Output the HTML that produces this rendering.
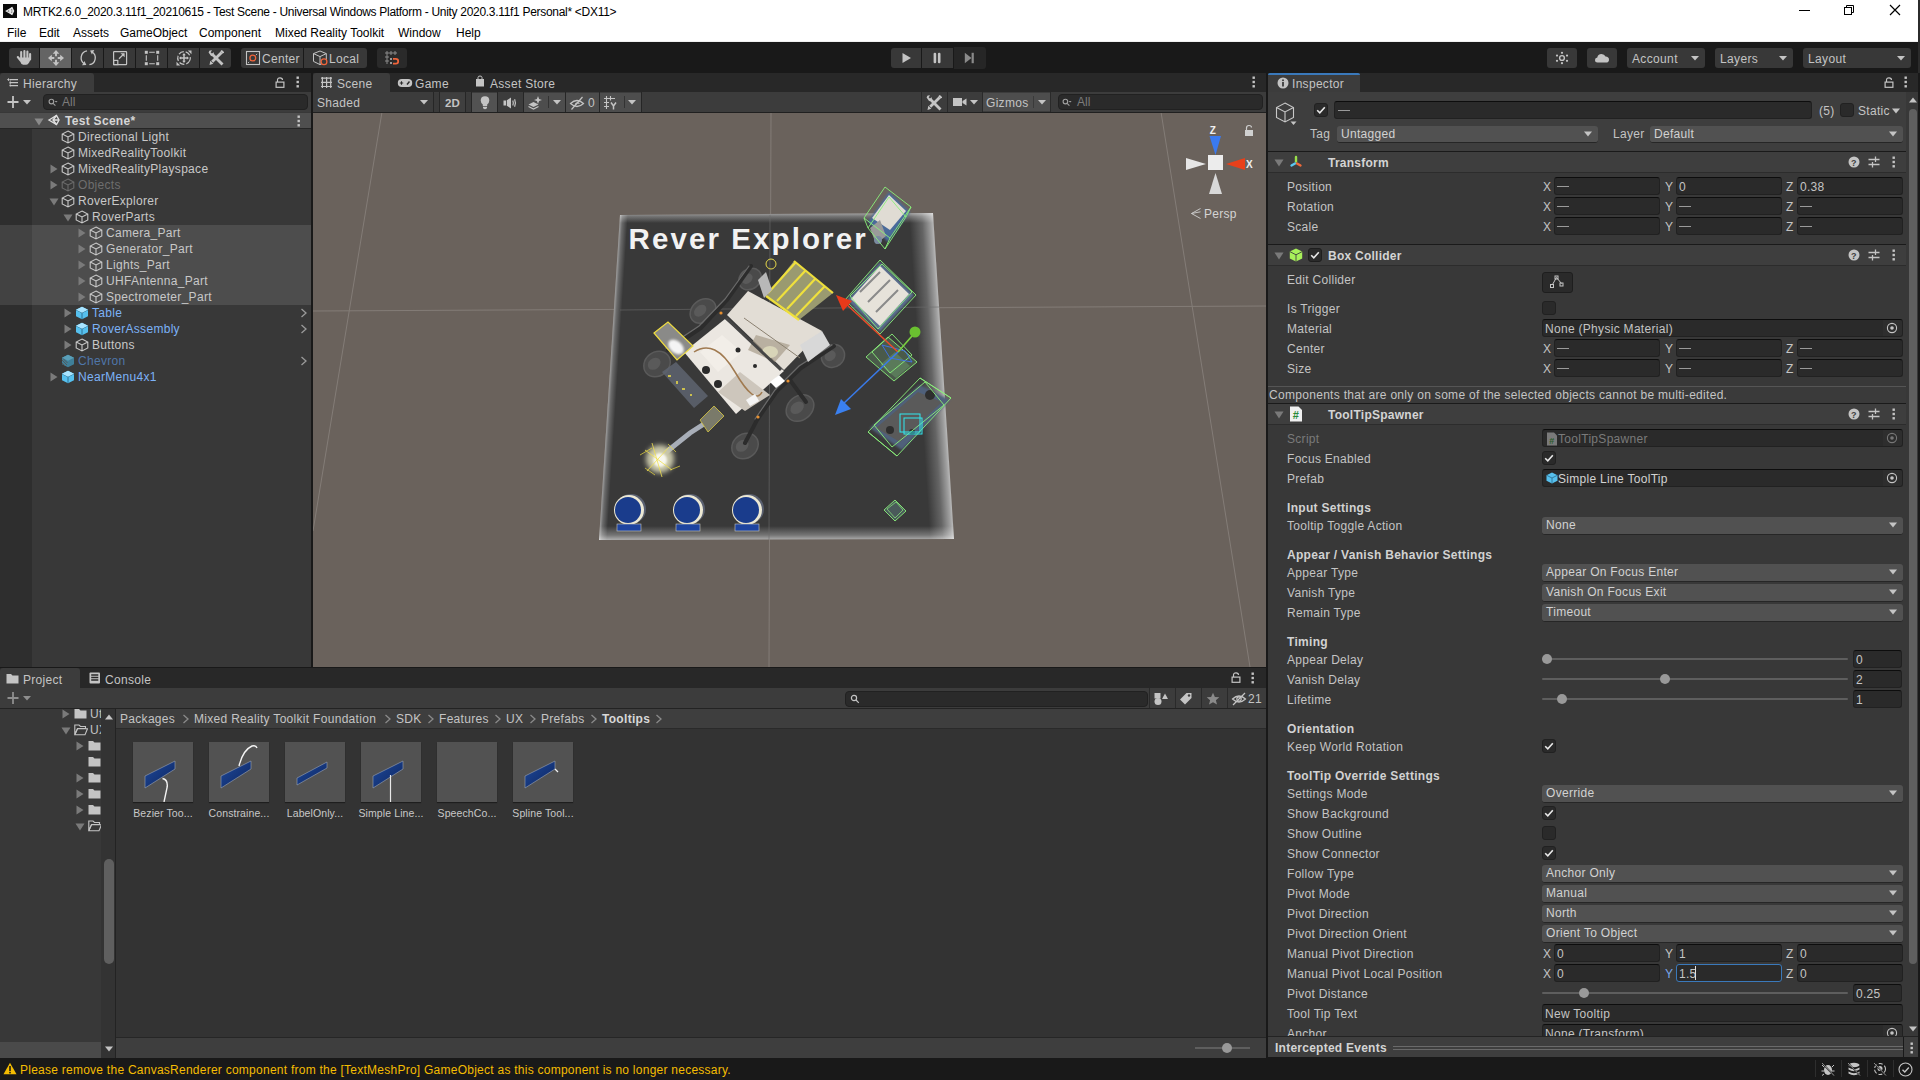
<!DOCTYPE html><html><head><meta charset="utf-8"><style>
*{box-sizing:border-box}
html,body{margin:0;padding:0}
body{width:1920px;height:1080px;overflow:hidden;background:#191919;position:relative;font-family:"Liberation Sans",sans-serif;font-size:12px;letter-spacing:0.3px;color:#c4c4c4}
div{position:absolute}
.t{white-space:nowrap}
</style></head><body><div style="left:0px;top:0px;width:1918px;height:42px;background:#fff"></div><div style="left:0px;top:41px;width:1918px;height:1px;background:#f0f0f0"></div><div style="left:1918px;top:0px;width:2px;height:73px;background:#2b2b2b"></div><svg style="position:absolute;left:3px;top:4px;" width="14" height="14" viewBox="0 0 14 14"><rect width="14" height="14" fill="#0a0a0a"/><g fill="none" stroke="#e6e6e6" stroke-width="1.4"><path d="M3.5 7 L9 3.8 L10.5 7 L9 10.2 Z"/><path d="M6 7 L10.5 7 M9 3.8 L6.5 7 L9 10.2"/></g></svg><div class="t" style="left:23px;top:4px;color:#000;font-size:12px;font-weight:400;line-height:16px;letter-spacing:-0.3px">MRTK2.6.0_2020.3.11f1_20210615 - Test Scene - Universal Windows Platform - Unity 2020.3.11f1 Personal* &lt;DX11&gt;</div><div style="left:1799px;top:10px;width:11px;height:1px;background:#000"></div><svg style="position:absolute;left:1843px;top:4px;" width="12" height="12" viewBox="0 0 12 12"><g fill="none" stroke="#000" stroke-width="1"><rect x="1.5" y="3.5" width="7" height="7"/><path d="M3.5 3.5 V1.5 H10.5 V8.5 H8.5"/></g></svg><svg style="position:absolute;left:1889px;top:4px;" width="12" height="12" viewBox="0 0 12 12"><path d="M1 1 L11 11 M11 1 L1 11" stroke="#000" stroke-width="1.2"/></svg><div class="t" style="left:7px;top:25px;color:#000;font-size:12px;font-weight:400;line-height:16px;letter-spacing:0px">File</div><div class="t" style="left:39px;top:25px;color:#000;font-size:12px;font-weight:400;line-height:16px;letter-spacing:0px">Edit</div><div class="t" style="left:73px;top:25px;color:#000;font-size:12px;font-weight:400;line-height:16px;letter-spacing:0px">Assets</div><div class="t" style="left:120px;top:25px;color:#000;font-size:12px;font-weight:400;line-height:16px;letter-spacing:0px">GameObject</div><div class="t" style="left:199px;top:25px;color:#000;font-size:12px;font-weight:400;line-height:16px;letter-spacing:0px">Component</div><div class="t" style="left:275px;top:25px;color:#000;font-size:12px;font-weight:400;line-height:16px;letter-spacing:0px">Mixed Reality Toolkit</div><div class="t" style="left:398px;top:25px;color:#000;font-size:12px;font-weight:400;line-height:16px;letter-spacing:0px">Window</div><div class="t" style="left:456px;top:25px;color:#000;font-size:12px;font-weight:400;line-height:16px;letter-spacing:0px">Help</div><div style="left:9px;top:48px;width:30px;height:20px;background:#383838;border-radius:3px 0 0 3px"></div><div style="left:40px;top:48px;width:31px;height:20px;background:#646464;"></div><div style="left:72px;top:48px;width:31px;height:20px;background:#383838;"></div><div style="left:104px;top:48px;width:31px;height:20px;background:#383838;"></div><div style="left:136px;top:48px;width:31px;height:20px;background:#383838;"></div><div style="left:168px;top:48px;width:31px;height:20px;background:#383838;"></div><div style="left:200px;top:48px;width:31px;height:20px;background:#383838;border-radius:0 3px 3px 0"></div><svg style="position:absolute;left:16px;top:49px;" width="16" height="17" viewBox="0 0 16 17"><g stroke="#c4c4c4" stroke-width="2.1" stroke-linecap="round"><path d="M5.2 3 V9 M8.4 2 V9 M11.4 2.6 V9 M14.1 5 V10.5"/><path d="M1.8 8 L4.6 11.5"/></g><path d="M4.2 8.5 H14.6 L14 11.5 Q12.8 15.6 10 15.8 H7.2 Q5 15.6 4.2 12.5Z" fill="#c4c4c4"/></svg><svg style="position:absolute;left:47px;top:49px;" width="18" height="18" viewBox="0 0 18 18"><g stroke="#c4c4c4" stroke-width="1.9"><path d="M9 4 V7.3 M9 10.7 V14 M4 9 H7.3 M10.7 9 H14"/></g><g fill="#c4c4c4"><path d="M9 1 L12.3 4.8 H5.7Z"/><path d="M9 17 L12.3 13.2 H5.7Z"/><path d="M1 9 L4.8 5.7 V12.3Z"/><path d="M17 9 L13.2 5.7 V12.3Z"/></g></svg><svg style="position:absolute;left:79px;top:49px;" width="18" height="18" viewBox="0 0 18 18"><g fill="none" stroke="#c4c4c4" stroke-width="1.3"><path d="M8.0 1.9 A7 7 0 0 0 5.7 14.9"/><path d="M10.4 15.7 A7 7 0 0 0 12.7 2.7"/></g><g fill="#c4c4c4"><path d="M7.3 15.9 L5.5 12.0 L3.1 16.3Z"/><path d="M11.1 1.5 L12.9 5.4 L15.3 1.1Z"/></g></svg><svg style="position:absolute;left:112px;top:50px;" width="16" height="16" viewBox="0 0 16 16"><g fill="none" stroke="#c4c4c4" stroke-width="1.2"><rect x="1.6" y="1.6" width="13" height="13" rx="0.6"/><rect x="1.6" y="10.4" width="4.2" height="4.2"/><path d="M7 8.7 L11.8 4"/></g><path d="M12.6 3.2 L12.6 7.3 L8.5 3.2Z" fill="#c4c4c4"/></svg><svg style="position:absolute;left:144px;top:50px;" width="16" height="16" viewBox="0 0 16 16"><g fill="#c4c4c4"><rect x="0.8" y="0.8" width="3" height="3"/><rect x="12.2" y="0.8" width="3" height="3"/><rect x="0.8" y="12.2" width="3" height="3"/><rect x="12.2" y="12.2" width="3" height="3"/></g><g stroke="#c4c4c4" stroke-width="1.1"><path d="M5.2 2.3 H10.8 M5.2 13.7 H10.8 M2.3 5.2 V10.8 M13.7 5.2 V10.8"/></g></svg><svg style="position:absolute;left:176px;top:50px;" width="16" height="16" viewBox="0 0 16 16"><g fill="none" stroke="#c4c4c4" stroke-width="1.2" stroke-dasharray="5.2 1.9"><circle cx="8" cy="8" r="6.3" transform="rotate(20 8 8)"/></g><g stroke="#c4c4c4" stroke-width="1.5"><path d="M8 4.2 V11.8 M4.2 8 H11.8"/></g><g fill="#c4c4c4"><path d="M8 3 L9.8 5.2 H6.2Z M8 13 L9.8 10.8 H6.2Z M3 8 L5.2 6.2 V9.8Z M13 8 L10.8 6.2 V9.8Z"/><path d="M15.5 0.5 V4.2 L11.8 0.5Z M0.5 15.5 V11.8 L4.2 15.5Z"/></g></svg><svg style="position:absolute;left:208px;top:50px;" width="16" height="16" viewBox="0 0 16 16"><g stroke="#c4c4c4" stroke-width="2.8" stroke-linecap="butt"><path d="M4.5 4.5 L14.5 14.5"/><path d="M13.6 2.4 L4.2 11.8"/></g><path d="M0.6 2.6 Q1 -0.2 4 0.4 L2.6 2.3 L3.9 3.6 L5.8 2.2 Q6.4 5.6 3.2 6.2Z" fill="#c4c4c4"/><path d="M1.5 14.9 L2.3 10.7 L5.3 13.7Z" fill="#c4c4c4"/><path d="M12.3 1.3 L13.8 -0.1 L16.1 2.2 L14.7 3.7Z" fill="#c4c4c4"/></svg><div style="left:241px;top:48px;width:62px;height:20px;background:#383838;border-radius:3px 0 0 3px"></div><div style="left:304px;top:48px;width:63px;height:20px;background:#383838;border-radius:0 3px 3px 0"></div><svg style="position:absolute;left:245px;top:50px;" width="16" height="16" viewBox="0 0 16 16"><rect x="1.5" y="1.5" width="13" height="13" fill="none" stroke="#c4c4c4" stroke-width="1.1"/><path d="M3 13 L13 3" stroke="#c4c4c4" stroke-width="0.9" stroke-dasharray="1.6 1.2"/><circle cx="7.8" cy="8" r="2.9" fill="#383838" stroke="#f0643a" stroke-width="1.3"/></svg><div class="t" style="left:262px;top:51px;color:#c4c4c4;font-size:12px;font-weight:400;line-height:16px;letter-spacing:0.3px">Center</div><svg style="position:absolute;left:312px;top:50px;" width="17" height="17" viewBox="0 0 17 17"><g fill="none" stroke="#c4c4c4" stroke-width="1"><path d="M8 1 L14.3 3.6 V11.4 L8 14.6 L1.5 11.4 V3.6 Z M1.5 3.6 L8 6.6 L14.3 3.6 M8 6.6 V14.6"/></g><circle cx="12" cy="11.8" r="2.9" fill="#383838" stroke="#f0643a" stroke-width="1.3"/></svg><div class="t" style="left:329px;top:51px;color:#c4c4c4;font-size:12px;font-weight:400;line-height:16px;letter-spacing:0.3px">Local</div><div style="left:377px;top:48px;width:30px;height:20px;background:#2a2a2a;border-radius:3px"></div><svg style="position:absolute;left:384px;top:50px;" width="16" height="16" viewBox="0 0 16 16"><g stroke="#8a8a8a" stroke-width="1" fill="none"><path d="M3 1 V14 M7 1 V5 M11 1 V5 M1 3 H13 M1 7 H5 M1 11 H5"/></g><g fill="#9a9a9a"><rect x="6" y="8" width="2" height="2"/><rect x="6" y="12" width="2" height="2"/></g><path d="M9 8.8 H11.8 Q14.2 8.8 14.2 11.2 Q14.2 13.6 11.8 13.6 H9" fill="none" stroke="#f0643a" stroke-width="1.8"/></svg><div style="left:891px;top:48px;width:30px;height:20px;background:#383838;border-radius:3px 0 0 3px"></div><div style="left:922px;top:48px;width:31px;height:20px;background:#383838"></div><div style="left:954px;top:47px;width:32px;height:22px;background:#262626;border-radius:0 3px 3px 0"></div><svg style="position:absolute;left:898px;top:50px;" width="16" height="16" viewBox="0 0 16 16"><path d="M4.5 3 L13 8 L4.5 13 Z" fill="#c4c4c4"/></svg><svg style="position:absolute;left:929px;top:50px;" width="16" height="16" viewBox="0 0 16 16"><rect x="4.6" y="2.8" width="2.6" height="10.4" rx="1.2" fill="#c4c4c4"/><rect x="8.9" y="2.8" width="2.6" height="10.4" rx="1.2" fill="#c4c4c4"/></svg><svg style="position:absolute;left:962px;top:50px;" width="16" height="16" viewBox="0 0 16 16"><path d="M2.8 2.8 L9.5 8 L2.8 13.2 Z" fill="#8a8a8a"/><rect x="9.6" y="2.8" width="2.2" height="10.4" fill="#8a8a8a"/></svg><div style="left:1547px;top:48px;width:30px;height:20px;background:#383838;border-radius:3px"></div><svg style="position:absolute;left:1554px;top:50px;" width="16" height="16" viewBox="0 0 16 16"><circle cx="8" cy="8" r="2.4" fill="none" stroke="#c4c4c4" stroke-width="1.4"/><g fill="#c4c4c4"><circle cx="8" cy="2.8" r="1.1"/><circle cx="8" cy="13.2" r="1.1"/><circle cx="3" cy="5.6" r="1.1"/><circle cx="3" cy="10.8" r="1.1"/><circle cx="13" cy="5.6" r="1.1"/><circle cx="13" cy="10.8" r="1.1"/></g></svg><div style="left:1587px;top:48px;width:30px;height:20px;background:#383838;border-radius:3px"></div><svg style="position:absolute;left:1594px;top:50px;" width="16" height="16" viewBox="0 0 16 16"><path fill="#c4c4c4" d="M3.5 12.5 Q1 12.5 1 10 Q1 7.8 3.3 7.6 Q3.8 4 7.5 4 Q10.5 4 11.5 6.6 Q15 6.8 15 9.7 Q15 12.5 12 12.5 Z"/></svg><div style="left:1627px;top:48px;width:78px;height:20px;background:#383838;border-radius:3px"></div><div class="t" style="left:1632px;top:51px;color:#c4c4c4;font-size:12px;font-weight:400;line-height:16px;letter-spacing:0.35px">Account</div><svg style="position:absolute;left:1690px;top:53px;" width="10" height="10" viewBox="0 0 10 10"><path d="M1 3 L9 3 L5 7.5 Z" fill="#c4c4c4"/></svg><div style="left:1715px;top:48px;width:78px;height:20px;background:#383838;border-radius:3px"></div><div class="t" style="left:1720px;top:51px;color:#c4c4c4;font-size:12px;font-weight:400;line-height:16px;letter-spacing:0.35px">Layers</div><svg style="position:absolute;left:1778px;top:53px;" width="10" height="10" viewBox="0 0 10 10"><path d="M1 3 L9 3 L5 7.5 Z" fill="#c4c4c4"/></svg><div style="left:1803px;top:48px;width:108px;height:20px;background:#383838;border-radius:3px"></div><div class="t" style="left:1808px;top:51px;color:#c4c4c4;font-size:12px;font-weight:400;line-height:16px;letter-spacing:0.35px">Layout</div><svg style="position:absolute;left:1896px;top:53px;" width="10" height="10" viewBox="0 0 10 10"><path d="M1 3 L9 3 L5 7.5 Z" fill="#c4c4c4"/></svg><div style="left:0px;top:73px;width:311px;height:19px;background:#282828"></div><div style="left:0px;top:73px;width:94px;height:19px;background:#3c3c3c;border-radius:3px 3px 0 0"></div><svg style="position:absolute;left:6px;top:77px;" width="13" height="11" viewBox="0 0 13 11"><g stroke="#c4c4c4" stroke-width="1.2"><path d="M4 2.6 H12 M4.5 5.7 H12 M4.5 8.6 H12"/><path d="M1.2 2.6 H3.8 M2.5 1.3 V3.9" stroke-width="0.9"/><path d="M4.2 3.2 V8.6" stroke-width="0.6"/></g><g fill="#c4c4c4"><circle cx="4.3" cy="5.7" r="0.9"/><circle cx="4.3" cy="8.6" r="0.9"/></g></svg><div class="t" style="left:23px;top:76px;color:#c4c4c4;font-size:12px;font-weight:400;line-height:16px;">Hierarchy</div><svg style="position:absolute;left:275px;top:77px;" width="10" height="11" viewBox="0 0 10 11"><g fill="none" stroke="#c4c4c4" stroke-width="1.2"><path d="M2.5 5 V3 Q2.5 0.8 5 0.8 Q7.5 0.8 7.5 3"/><rect x="1.1" y="5.1" width="7.8" height="5.2"/></g></svg><svg style="position:absolute;left:296px;top:76px;" width="4" height="12" viewBox="0 0 4 12"><g fill="#c4c4c4"><rect x="0.5" y="0.5" width="2.4" height="2.4"/><rect x="0.5" y="4.8" width="2.4" height="2.4"/><rect x="0.5" y="9.1" width="2.4" height="2.4"/></g></svg><div style="left:0px;top:92px;width:311px;height:21px;background:#3c3c3c;border-bottom:1px solid #202020"></div><svg style="position:absolute;left:7px;top:95px;" width="28" height="14" viewBox="0 0 28 14"><path d="M6 1 V13 M0.5 7 H11.5" stroke="#c4c4c4" stroke-width="1.8"/><path d="M16 5 L24 5 L20 9.5Z" fill="#c4c4c4"/></svg><div style="left:43px;top:94px;width:265px;height:16px;background:#2a2a2a;border:1px solid #212121;border-radius:4px"></div><svg style="position:absolute;left:48px;top:97px;" width="14" height="12" viewBox="0 0 14 12"><g fill="none" stroke="#a0a0a0" stroke-width="1.1"><circle cx="3.4" cy="4.6" r="2.3"/><path d="M5.1 6.3 L7.4 8.6"/></g><path d="M6.6 3.9 L9.6 3.9 L8.1 5.5Z" fill="#a0a0a0"/></svg><div class="t" style="left:62px;top:94px;color:#7c7c7c;font-size:12px;font-weight:400;line-height:16px;letter-spacing:0px">All</div><div style="left:0px;top:112px;width:311px;height:555px;background:#383838"></div><div style="left:0px;top:128px;width:311px;height:1px;background:#262626"></div><div style="left:0px;top:129px;width:32px;height:538px;background:#2e2e2e"></div><div style="left:0px;top:113px;width:311px;height:15px;background:#4f4f4f"></div><svg style="position:absolute;left:33px;top:117px;" width="12" height="10" viewBox="0 0 12 10"><path d="M1.5 1.5 L10.5 1.5 L6 8.5 Z" fill="#8a8a8a"/></svg><svg style="position:absolute;left:47px;top:113px;" width="14" height="14" viewBox="0 0 14 14"><g fill="none" stroke="#e0e0e0" stroke-width="1.4"><path d="M2 7 L9.5 2.5 L12 7 L9.5 11.5 Z"/><path d="M5.5 7 H12 M9.5 2.5 L6 7 L9.5 11.5"/></g></svg><div class="t" style="left:65px;top:113px;color:#d6d6d6;font-size:12px;font-weight:700;line-height:16px;letter-spacing:0.3px">Test Scene*</div><svg style="position:absolute;left:297px;top:115px;" width="4" height="12" viewBox="0 0 4 12"><g fill="#c4c4c4"><rect x="0.5" y="0.5" width="2.4" height="2.4"/><rect x="0.5" y="4.8" width="2.4" height="2.4"/><rect x="0.5" y="9.1" width="2.4" height="2.4"/></g></svg><div style="left:0px;top:225px;width:311px;height:80px;background:#4d4d4d"></div><div style="left:0px;top:225px;width:32px;height:80px;background:#424242"></div><svg style="position:absolute;left:61px;top:130px;" width="14" height="14" viewBox="0 0 14 14"><g fill="none" stroke="#c8c8c8" stroke-width="1.1"><path d="M7 1 L12.8 4 L12.8 10 L7 13 L1.2 10 L1.2 4 Z M1.2 4 L7 7 L12.8 4 M7 7 V13"/></g></svg><div class="t" style="left:78px;top:129px;color:#c8c8c8;font-size:12px;font-weight:400;line-height:16px;">Directional Light</div><svg style="position:absolute;left:61px;top:146px;" width="14" height="14" viewBox="0 0 14 14"><g fill="none" stroke="#c8c8c8" stroke-width="1.1"><path d="M7 1 L12.8 4 L12.8 10 L7 13 L1.2 10 L1.2 4 Z M1.2 4 L7 7 L12.8 4 M7 7 V13"/></g></svg><div class="t" style="left:78px;top:145px;color:#c8c8c8;font-size:12px;font-weight:400;line-height:16px;">MixedRealityToolkit</div><svg style="position:absolute;left:49px;top:163px;" width="10" height="12" viewBox="0 0 10 12"><path d="M1.5 1.5 L8.5 6 L1.5 10.5 Z" fill="#7a7a7a"/></svg><svg style="position:absolute;left:61px;top:162px;" width="14" height="14" viewBox="0 0 14 14"><g fill="none" stroke="#c8c8c8" stroke-width="1.1"><path d="M7 1 L12.8 4 L12.8 10 L7 13 L1.2 10 L1.2 4 Z M1.2 4 L7 7 L12.8 4 M7 7 V13"/></g></svg><div class="t" style="left:78px;top:161px;color:#c8c8c8;font-size:12px;font-weight:400;line-height:16px;">MixedRealityPlayspace</div><svg style="position:absolute;left:49px;top:179px;" width="10" height="12" viewBox="0 0 10 12"><path d="M1.5 1.5 L8.5 6 L1.5 10.5 Z" fill="#7a7a7a"/></svg><svg style="position:absolute;left:61px;top:178px;" width="14" height="14" viewBox="0 0 14 14"><g fill="none" stroke="#6a6a6a" stroke-width="1.1"><path d="M7 1 L12.8 4 L12.8 10 L7 13 L1.2 10 L1.2 4 Z M1.2 4 L7 7 L12.8 4 M7 7 V13"/></g></svg><div class="t" style="left:78px;top:177px;color:#6e6e6e;font-size:12px;font-weight:400;line-height:16px;">Objects</div><svg style="position:absolute;left:48px;top:197px;" width="12" height="10" viewBox="0 0 12 10"><path d="M1.5 1.5 L10.5 1.5 L6 8.5 Z" fill="#7a7a7a"/></svg><svg style="position:absolute;left:61px;top:194px;" width="14" height="14" viewBox="0 0 14 14"><g fill="none" stroke="#c8c8c8" stroke-width="1.1"><path d="M7 1 L12.8 4 L12.8 10 L7 13 L1.2 10 L1.2 4 Z M1.2 4 L7 7 L12.8 4 M7 7 V13"/></g></svg><div class="t" style="left:78px;top:193px;color:#c8c8c8;font-size:12px;font-weight:400;line-height:16px;">RoverExplorer</div><svg style="position:absolute;left:62px;top:213px;" width="12" height="10" viewBox="0 0 12 10"><path d="M1.5 1.5 L10.5 1.5 L6 8.5 Z" fill="#7a7a7a"/></svg><svg style="position:absolute;left:75px;top:210px;" width="14" height="14" viewBox="0 0 14 14"><g fill="none" stroke="#c8c8c8" stroke-width="1.1"><path d="M7 1 L12.8 4 L12.8 10 L7 13 L1.2 10 L1.2 4 Z M1.2 4 L7 7 L12.8 4 M7 7 V13"/></g></svg><div class="t" style="left:92px;top:209px;color:#c8c8c8;font-size:12px;font-weight:400;line-height:16px;">RoverParts</div><svg style="position:absolute;left:77px;top:227px;" width="10" height="12" viewBox="0 0 10 12"><path d="M1.5 1.5 L8.5 6 L1.5 10.5 Z" fill="#7a7a7a"/></svg><svg style="position:absolute;left:89px;top:226px;" width="14" height="14" viewBox="0 0 14 14"><g fill="none" stroke="#c8c8c8" stroke-width="1.1"><path d="M7 1 L12.8 4 L12.8 10 L7 13 L1.2 10 L1.2 4 Z M1.2 4 L7 7 L12.8 4 M7 7 V13"/></g></svg><div class="t" style="left:106px;top:225px;color:#c8c8c8;font-size:12px;font-weight:400;line-height:16px;">Camera_Part</div><svg style="position:absolute;left:77px;top:243px;" width="10" height="12" viewBox="0 0 10 12"><path d="M1.5 1.5 L8.5 6 L1.5 10.5 Z" fill="#7a7a7a"/></svg><svg style="position:absolute;left:89px;top:242px;" width="14" height="14" viewBox="0 0 14 14"><g fill="none" stroke="#c8c8c8" stroke-width="1.1"><path d="M7 1 L12.8 4 L12.8 10 L7 13 L1.2 10 L1.2 4 Z M1.2 4 L7 7 L12.8 4 M7 7 V13"/></g></svg><div class="t" style="left:106px;top:241px;color:#c8c8c8;font-size:12px;font-weight:400;line-height:16px;">Generator_Part</div><svg style="position:absolute;left:77px;top:259px;" width="10" height="12" viewBox="0 0 10 12"><path d="M1.5 1.5 L8.5 6 L1.5 10.5 Z" fill="#7a7a7a"/></svg><svg style="position:absolute;left:89px;top:258px;" width="14" height="14" viewBox="0 0 14 14"><g fill="none" stroke="#c8c8c8" stroke-width="1.1"><path d="M7 1 L12.8 4 L12.8 10 L7 13 L1.2 10 L1.2 4 Z M1.2 4 L7 7 L12.8 4 M7 7 V13"/></g></svg><div class="t" style="left:106px;top:257px;color:#c8c8c8;font-size:12px;font-weight:400;line-height:16px;">Lights_Part</div><svg style="position:absolute;left:77px;top:275px;" width="10" height="12" viewBox="0 0 10 12"><path d="M1.5 1.5 L8.5 6 L1.5 10.5 Z" fill="#7a7a7a"/></svg><svg style="position:absolute;left:89px;top:274px;" width="14" height="14" viewBox="0 0 14 14"><g fill="none" stroke="#c8c8c8" stroke-width="1.1"><path d="M7 1 L12.8 4 L12.8 10 L7 13 L1.2 10 L1.2 4 Z M1.2 4 L7 7 L12.8 4 M7 7 V13"/></g></svg><div class="t" style="left:106px;top:273px;color:#c8c8c8;font-size:12px;font-weight:400;line-height:16px;">UHFAntenna_Part</div><svg style="position:absolute;left:77px;top:291px;" width="10" height="12" viewBox="0 0 10 12"><path d="M1.5 1.5 L8.5 6 L1.5 10.5 Z" fill="#7a7a7a"/></svg><svg style="position:absolute;left:89px;top:290px;" width="14" height="14" viewBox="0 0 14 14"><g fill="none" stroke="#c8c8c8" stroke-width="1.1"><path d="M7 1 L12.8 4 L12.8 10 L7 13 L1.2 10 L1.2 4 Z M1.2 4 L7 7 L12.8 4 M7 7 V13"/></g></svg><div class="t" style="left:106px;top:289px;color:#c8c8c8;font-size:12px;font-weight:400;line-height:16px;">Spectrometer_Part</div><svg style="position:absolute;left:63px;top:307px;" width="10" height="12" viewBox="0 0 10 12"><path d="M1.5 1.5 L8.5 6 L1.5 10.5 Z" fill="#7a7a7a"/></svg><svg style="position:absolute;left:75px;top:306px;" width="14" height="14" viewBox="0 0 14 14"><path d="M7 0.8 L13 3.8 L13 10.2 L7 13.2 L1 10.2 L1 3.8 Z" fill="#56c0ee"/><path d="M1 3.8 L7 6.8 L13 3.8 M7 6.8 V13.2" fill="none" stroke="#2a6a8a" stroke-width="0.9"/><path d="M7 0.8 L13 3.8 L7 6.8 L1 3.8Z" fill="#a8e4ff"/></svg><div class="t" style="left:92px;top:305px;color:#7cb2f7;font-size:12px;font-weight:400;line-height:16px;">Table</div><svg style="position:absolute;left:300px;top:308px;" width="8" height="10" viewBox="0 0 8 10"><path d="M1.5 1 L6 5 L1.5 9" fill="none" stroke="#9a9a9a" stroke-width="1.3"/></svg><svg style="position:absolute;left:63px;top:323px;" width="10" height="12" viewBox="0 0 10 12"><path d="M1.5 1.5 L8.5 6 L1.5 10.5 Z" fill="#7a7a7a"/></svg><svg style="position:absolute;left:75px;top:322px;" width="14" height="14" viewBox="0 0 14 14"><path d="M7 0.8 L13 3.8 L13 10.2 L7 13.2 L1 10.2 L1 3.8 Z" fill="#56c0ee"/><path d="M1 3.8 L7 6.8 L13 3.8 M7 6.8 V13.2" fill="none" stroke="#2a6a8a" stroke-width="0.9"/><path d="M7 0.8 L13 3.8 L7 6.8 L1 3.8Z" fill="#a8e4ff"/></svg><div class="t" style="left:92px;top:321px;color:#7cb2f7;font-size:12px;font-weight:400;line-height:16px;">RoverAssembly</div><svg style="position:absolute;left:300px;top:324px;" width="8" height="10" viewBox="0 0 8 10"><path d="M1.5 1 L6 5 L1.5 9" fill="none" stroke="#9a9a9a" stroke-width="1.3"/></svg><svg style="position:absolute;left:63px;top:339px;" width="10" height="12" viewBox="0 0 10 12"><path d="M1.5 1.5 L8.5 6 L1.5 10.5 Z" fill="#7a7a7a"/></svg><svg style="position:absolute;left:75px;top:338px;" width="14" height="14" viewBox="0 0 14 14"><g fill="none" stroke="#c8c8c8" stroke-width="1.1"><path d="M7 1 L12.8 4 L12.8 10 L7 13 L1.2 10 L1.2 4 Z M1.2 4 L7 7 L12.8 4 M7 7 V13"/></g></svg><div class="t" style="left:92px;top:337px;color:#c8c8c8;font-size:12px;font-weight:400;line-height:16px;">Buttons</div><svg style="position:absolute;left:61px;top:354px;" width="14" height="14" viewBox="0 0 14 14"><path d="M7 0.8 L13 3.8 L13 10.2 L7 13.2 L1 10.2 L1 3.8 Z" fill="#3f7f99"/><path d="M7 0.8 L13 3.8 L7 6.8 L1 3.8Z" fill="#5a9fb8"/><path d="M1 6 L6 11 M1 9 L4 12 M2 4.5 L6.5 9" stroke="#555" stroke-width="0.9"/></svg><div class="t" style="left:78px;top:353px;color:#4f76aa;font-size:12px;font-weight:400;line-height:16px;">Chevron</div><svg style="position:absolute;left:300px;top:356px;" width="8" height="10" viewBox="0 0 8 10"><path d="M1.5 1 L6 5 L1.5 9" fill="none" stroke="#9a9a9a" stroke-width="1.3"/></svg><svg style="position:absolute;left:49px;top:371px;" width="10" height="12" viewBox="0 0 10 12"><path d="M1.5 1.5 L8.5 6 L1.5 10.5 Z" fill="#7a7a7a"/></svg><svg style="position:absolute;left:61px;top:370px;" width="14" height="14" viewBox="0 0 14 14"><path d="M7 0.8 L13 3.8 L13 10.2 L7 13.2 L1 10.2 L1 3.8 Z" fill="#56c0ee"/><path d="M1 3.8 L7 6.8 L13 3.8 M7 6.8 V13.2" fill="none" stroke="#2a6a8a" stroke-width="0.9"/><path d="M7 0.8 L13 3.8 L7 6.8 L1 3.8Z" fill="#a8e4ff"/></svg><div class="t" style="left:78px;top:369px;color:#7cb2f7;font-size:12px;font-weight:400;line-height:16px;">NearMenu4x1</div><svg style="position:absolute;left:313px;top:112px;" width="953" height="555" viewBox="0 0 953 555"><defs><filter id="bl1" x="-20%" y="-20%" width="140%" height="140%"><feGaussianBlur stdDeviation="4"/></filter><filter id="bl2"><feGaussianBlur stdDeviation="1"/></filter><filter id="bl3" x="-50%" y="-50%" width="200%" height="200%"><feGaussianBlur stdDeviation="2.5"/></filter><linearGradient id="tg" x1="0" y1="0" x2="0" y2="1"><stop offset="0" stop-color="#393939"/><stop offset="1" stop-color="#3a3a3a"/></linearGradient></defs><rect width="953" height="555" fill="#6a625c"/><g stroke="#8a837e" stroke-width="1" opacity="0.8"><line x1="69" y1="0" x2="0" y2="419"/><line x1="458" y1="0" x2="456" y2="555"/><line x1="0" y1="199" x2="953" y2="194"/><line x1="848" y1="0" x2="937" y2="555"/></g><clipPath id="tc"><polygon points="307.0,103.0 620.0,101.0 641.0,427.0 286.0,428.0"/></clipPath><linearGradient id="gR" x1="0" y1="0" x2="1" y2="0"><stop offset="0" stop-color="#fff" stop-opacity="0"/><stop offset="0.5" stop-color="#fff" stop-opacity="0.22"/><stop offset="0.85" stop-color="#fff" stop-opacity="0.52"/><stop offset="1" stop-color="#fff" stop-opacity="0.7"/></linearGradient><linearGradient id="gL" x1="1" y1="0" x2="0" y2="0"><stop offset="0" stop-color="#fff" stop-opacity="0"/><stop offset="0.6" stop-color="#fff" stop-opacity="0.25"/><stop offset="1" stop-color="#fff" stop-opacity="0.62"/></linearGradient><linearGradient id="gT" x1="0" y1="1" x2="0" y2="0"><stop offset="0" stop-color="#fff" stop-opacity="0"/><stop offset="0.6" stop-color="#fff" stop-opacity="0.3"/><stop offset="1" stop-color="#fff" stop-opacity="0.62"/></linearGradient><linearGradient id="gB" x1="0" y1="0" x2="0" y2="1"><stop offset="0" stop-color="#fff" stop-opacity="0"/><stop offset="0.6" stop-color="#fff" stop-opacity="0.3"/><stop offset="1" stop-color="#fff" stop-opacity="0.66"/></linearGradient><g clip-path="url(#tc)"><polygon points="307.0,103.0 620.0,101.0 641.0,427.0 286.0,428.0" fill="#393939"/><g transform="translate(620,101) skewX(3.68)"><rect x="-24" y="0" width="25" height="330" fill="url(#gR)"/></g><g transform="translate(307,103) skewX(-3.7)"><rect x="-1" y="0" width="9" height="330" fill="url(#gL)"/></g><rect x="282" y="100" width="360" height="11" fill="url(#gT)"/><rect x="282" y="414" width="360" height="15" fill="url(#gB)"/></g><g stroke="#6c6c6c" stroke-width="1" opacity="0.6"><line x1="457" y1="103" x2="456" y2="428"/><line x1="307" y1="198" x2="627" y2="195"/></g><text x="315.5" y="136.5" font-family="Liberation Sans" font-weight="700" font-size="29.5" letter-spacing="2.1" fill="#f2f2f2">Rever Explorer</text><g><ellipse cx="390" cy="199" rx="14" ry="11" fill="#4a4a4a" stroke="#5a5a5a" stroke-width="1.5" transform="rotate(-40 390 199)"/><ellipse cx="388" cy="197" rx="7.0" ry="5.0" fill="#5a5a5a" transform="rotate(-40 390 199)"/><ellipse cx="437" cy="167" rx="12" ry="10" fill="#4a4a4a" stroke="#5a5a5a" stroke-width="1.5" transform="rotate(-40 437 167)"/><ellipse cx="435" cy="165" rx="6.0" ry="4.5" fill="#5a5a5a" transform="rotate(-40 437 167)"/><ellipse cx="344" cy="252" rx="14" ry="12" fill="#4a4a4a" stroke="#5a5a5a" stroke-width="1.5" transform="rotate(-40 344 252)"/><ellipse cx="342" cy="250" rx="7.0" ry="5.4" fill="#5a5a5a" transform="rotate(-40 344 252)"/><ellipse cx="487" cy="296" rx="15" ry="12" fill="#4a4a4a" stroke="#5a5a5a" stroke-width="1.5" transform="rotate(-40 487 296)"/><ellipse cx="485" cy="294" rx="7.5" ry="5.4" fill="#5a5a5a" transform="rotate(-40 487 296)"/><ellipse cx="520" cy="244" rx="12" ry="11" fill="#4a4a4a" stroke="#5a5a5a" stroke-width="1.5" transform="rotate(-40 520 244)"/><ellipse cx="518" cy="242" rx="6.0" ry="5.0" fill="#5a5a5a" transform="rotate(-40 520 244)"/><ellipse cx="432" cy="334" rx="14" ry="12" fill="#4a4a4a" stroke="#5a5a5a" stroke-width="1.5" transform="rotate(-40 432 334)"/><ellipse cx="430" cy="332" rx="7.0" ry="5.4" fill="#5a5a5a" transform="rotate(-40 432 334)"/><g stroke="#2c2c2c" stroke-width="4" stroke-linecap="round" fill="none"><path d="M438,154 L414,188 L388,216 L355,238"/><path d="M521,234 L488,256 L464,279"/><path d="M464,279 L444,308 L432,331"/><path d="M477,268 L493,290"/></g><g stroke="#6a6a6a" stroke-width="1.2" stroke-linecap="round" fill="none"><path d="M436,154 L412,187 L386,214 L353,236"/><path d="M519,233 L486,254 L462,278 L442,307"/></g><polygon points="371.0,240.0 412.0,207.0 471.0,259.0 423.0,302.0" fill="#ebe7e1" /><polygon points="414.0,203.0 435.0,179.0 509.0,219.0 471.0,258.0" fill="#e2ddd5" /><polygon points="487.0,233.0 509.0,219.0 517.0,233.0 495.0,250.0" fill="#d8d8d8" /><polygon points="387.0,240.0 409.0,223.0 429.0,240.0 405.0,260.0" fill="#f2eee8" /><polygon points="405.0,280.0 427.0,260.0 457.0,283.0 432.0,299.0" fill="#cdc6bc" /><polygon points="443.0,223.0 477.0,233.0 462.0,250.0 435.0,238.0" fill="#a89c8a" opacity="0.7"/><ellipse cx="457" cy="240" rx="8" ry="6" fill="#d8d4b8"/><g fill="#2a2a2a"><circle cx="393" cy="258" r="4"/><circle cx="405" cy="272" r="4"/><circle cx="425" cy="238" r="2.5"/><circle cx="442" cy="254" r="2"/></g><path d="M381,240 Q402,226 422,260 T449,280" stroke="#a07a50" stroke-width="1.5" fill="none"/><line x1="413" y1="206" x2="468" y2="258" stroke="#454545" stroke-width="3"/><line x1="431" y1="206" x2="487" y2="246" stroke="#8a8070" stroke-width="1"/><polygon points="457.0,270.0 466.0,263.0 472.0,269.0 463.0,276.0" fill="#ffffff" /><polygon points="433.0,288.0 442.0,282.0 446.0,289.0 437.0,294.0" fill="#f4f4f4" /><polygon points="453.0,184.0 481.0,149.0 520.0,181.0 486.0,208.0" fill="#9a9a70" /><g stroke="#f4e43a" stroke-width="2.2" opacity="0.95"><path d="M455,181 L483,150 M464,189 L493,158 M474,197 L503,166 M483,204 L512,174 M453,184 L486,208 M481,149 L520,181"/></g><circle cx="458" cy="152" r="5" fill="none" stroke="#e6d84a" stroke-width="1"/><polygon points="445.0,168.0 453.0,160.0 459.0,178.0 451.0,186.0" fill="#b8b8b8" /><polygon points="341.0,221.0 355.0,210.0 380.0,234.0 364.0,248.0" fill="#8a8a88" stroke="#eedc40" stroke-width="1.2"/><ellipse cx="363" cy="235" rx="9" ry="6" fill="#f4f4f4" filter="url(#bl2)" transform="rotate(40 363 235)"/><polygon points="349.0,260.0 363.0,250.0 395.0,284.0 381.0,296.0" fill="#5e6470" opacity="0.85"/><g fill="#e8d848" opacity="0.8"><rect x="355" y="263" width="3" height="2"/><rect x="363" y="269" width="2" height="3"/><rect x="369" y="276" width="3" height="2"/><rect x="377" y="282" width="2" height="2"/></g><path d="M408,301 L377,321 L347,345" stroke="#a8aeb8" stroke-width="5" fill="none"/><polygon points="387.0,308.0 401.0,294.0 411.0,304.0 395.0,320.0" fill="#7a7a6a" stroke="#d8c840" stroke-width="0.8"/><circle cx="347" cy="347" r="14" fill="#c8c6a8" filter="url(#bl3)"/><circle cx="347" cy="348" r="7" fill="#f8f8f0" filter="url(#bl2)"/><g stroke="#e8d840" stroke-width="0.8" opacity="0.9"><path d="M327,343 L339,336 M332,356 L342,363 M355,332 L363,340 M357,358 L367,354"/></g><g stroke="#f0e050" stroke-width="0.8"><path d="M332,338 L359,358 M334,359 L356,335 M339,331 L349,365"/></g><g fill="#e89030"><circle cx="475" cy="269" r="1.6"/><circle cx="445" cy="305" r="1.6"/><circle cx="408" cy="201" r="1.6"/></g></g><g><polygon points="555.0,110.0 576.0,80.0 597.0,100.0 575.0,130.0" fill="#4a6a9a" filter="url(#bl2)"/><polygon points="559.0,106.0 576.0,83.0 593.0,99.0 577.0,118.0" fill="#e0dcd4"/><polygon points="557.0,116.0 567.0,108.0 573.0,124.0 563.0,132.0" fill="#9a9a9a"/><circle cx="565" cy="128" r="4" fill="#7a8aa0"/><g fill="none" stroke="#8af07a" stroke-width="0.9"><polygon points="551.0,106.0 572.0,75.0 598.0,95.0 577.0,126.0"/><polygon points="555.0,116.0 576.0,85.0 593.0,105.0 572.0,137.0"/><path d="M551,106 L555,116 M577,126 L572,137 M598,95 L593,105"/></g><polygon points="534.0,188.0 567.0,150.0 601.0,183.0 567.0,220.0" fill="#5b7090" filter="url(#bl2)"/><polygon points="538.0,187.0 567.0,154.0 596.0,182.0 567.0,214.0" fill="#e6e2da"/><g stroke="#8a8a8a" stroke-width="2"><path d="M547,180 L567,160 M555,190 L577,168 M563,200 L585,178"/></g><g fill="none" stroke="#8af07a" stroke-width="0.9"><polygon points="532.0,188.0 567.0,148.0 603.0,183.0 567.0,222.0"/><polygon points="537.0,184.0 569.0,152.0 599.0,180.0 565.0,217.0"/></g><polygon points="553.0,245.0 575.0,225.0 604.0,250.0 581.0,269.0" fill="#4a5a4a"/><polygon points="567.0,253.0 582.0,240.0 597.0,254.0 583.0,266.0" fill="#5a7a5a"/><g fill="none" stroke="#8af07a" stroke-width="0.9"><polygon points="553.0,245.0 575.0,225.0 604.0,250.0 581.0,269.0"/><polygon points="559.0,240.0 579.0,222.0 599.0,243.0 577.0,261.0"/></g><polygon points="569.0,233.0 592.0,239.0 599.0,250.0 577.0,246.0" fill="none" stroke="#4070e0" stroke-width="1"/><polygon points="557.0,316.0 607.0,273.0 637.0,288.0 589.0,338.0" fill="#50607a" filter="url(#bl2)"/><polygon points="563.0,316.0 605.0,280.0 629.0,290.0 587.0,330.0" fill="#5a5a5a"/><g fill="#2e2e2e"><circle cx="617" cy="283" r="5"/><circle cx="577" cy="318" r="4"/><circle cx="599" cy="320" r="3"/></g><g fill="none" stroke="#8af07a" stroke-width="0.9"><polygon points="555.0,320.0 607.0,266.0 638.0,286.0 584.0,344.0"/><polygon points="561.0,313.0 612.0,270.0 631.0,293.0 579.0,335.0"/><path d="M555,320 L584,344 M607,266 L638,286"/></g><g fill="none" stroke="#30e8f0" stroke-width="1"><rect x="587" y="302" width="20" height="18"/><rect x="591" y="306" width="18" height="16"/></g><polygon points="571.0,398.0 582.0,388.0 593.0,399.0 582.0,409.0" fill="#4a5a5a" stroke="#8af07a" stroke-width="0.9"/><polygon points="574.0,397.0 583.0,390.0 590.0,398.0 582.0,406.0" fill="none" stroke="#8af07a" stroke-width="0.7"/></g><g stroke-width="1.6"><line x1="585" y1="240" x2="531" y2="190" stroke="#e84a2a"/><line x1="585" y1="240" x2="529" y2="293" stroke="#3a7ae8"/><line x1="585" y1="240" x2="599" y2="224" stroke="#7ad040"/></g><polygon points="523.0,183.0 539.0,189.0 530.0,199.0" fill="#e83a1a"/><polygon points="522.0,303.0 528.0,287.0 538.0,297.0" fill="#3a80f0"/><circle cx="602" cy="220" r="5.5" fill="#6ac030"/><circle cx="318" cy="397" r="15" fill="#5a6070"/><circle cx="316" cy="398" r="15" fill="#ece8d4"/><circle cx="315" cy="398" r="13" fill="#1a3c8c"/><rect x="304" y="412" width="24" height="7" fill="#1e44a0" stroke="#c8c8c0" stroke-width="0.6"/><circle cx="377" cy="397" r="15" fill="#5a6070"/><circle cx="375" cy="398" r="15" fill="#ece8d4"/><circle cx="374" cy="398" r="13" fill="#1a3c8c"/><rect x="363" y="412" width="24" height="7" fill="#1e44a0" stroke="#c8c8c0" stroke-width="0.6"/><circle cx="436" cy="397" r="15" fill="#5a6070"/><circle cx="434" cy="398" r="15" fill="#ece8d4"/><circle cx="433" cy="398" r="13" fill="#1a3c8c"/><rect x="422" y="412" width="24" height="7" fill="#1e44a0" stroke="#c8c8c0" stroke-width="0.6"/><g transform="translate(-313,-112)"><text x="1213" y="134" font-family="Liberation Sans" font-weight="700" font-size="10" fill="#f0f0f0" text-anchor="middle">Z</text><polygon points="1209.5,136 1221,136 1215.5,155" fill="#3a7af0"/><polygon points="1245,158 1245,170 1226,164" fill="#e8401a"/><text x="1249.5" y="168" font-family="Liberation Sans" font-weight="700" font-size="10" fill="#f0f0f0" text-anchor="middle">X</text><polygon points="1186,158 1186,170 1206,164" fill="#e6e6e6"/><polygon points="1209,194 1222,194 1215.5,173" fill="#d8d8d8"/><rect x="1208" y="155" width="15" height="15" fill="#ececec"/><path d="M1200.5 208.5 L1191.5 213.5 L1200.5 218.5 M1191.5 213.5 L1200.5 211.8" fill="none" stroke="#d0d0d0" stroke-width="0.9"/><text x="1204" y="218" font-family="Liberation Sans" font-size="12" letter-spacing="0.3" fill="#d4d4d4">Persp</text><g fill="#d0d0d0"><rect x="1245" y="130" width="8" height="6"/></g><path d="M1246.5 130 V128 Q1246.5 125.5 1249 125.5 Q1251.5 125.5 1251.5 127.5" fill="none" stroke="#d0d0d0" stroke-width="1.2"/></g></svg><div style="left:313px;top:73px;width:953px;height:19px;background:#282828"></div><div style="left:313px;top:73px;width:77px;height:19px;background:#3c3c3c;border-radius:3px 3px 0 0"></div><svg style="position:absolute;left:320px;top:76px;" width="13" height="13" viewBox="0 0 13 13"><path d="M2.4 1 V12 M6.6 1 V12 M10.7 1 V12 M1 2.1 H12 M1 6.3 H12 M1 10.5 H12" stroke="#c4c4c4" stroke-width="1.2"/></svg><div class="t" style="left:337px;top:76px;color:#c4c4c4;font-size:12px;font-weight:400;line-height:16px;">Scene</div><svg style="position:absolute;left:397px;top:78px;" width="16" height="10" viewBox="0 0 16 10"><rect x="0.8" y="1" width="14.4" height="8" rx="4" fill="#c4c4c4"/><path d="M2.8 5 H6.2 M4.5 3.3 V6.7" stroke="#282828" stroke-width="1.1"/><path d="M10 6.5 L12.5 3.5" stroke="#282828" stroke-width="1.4"/></svg><div class="t" style="left:415px;top:76px;color:#c4c4c4;font-size:12px;font-weight:400;line-height:16px;">Game</div><svg style="position:absolute;left:475px;top:75px;" width="10" height="12" viewBox="0 0 10 12"><path fill="#c4c4c4" d="M1 4 H9 V11.5 H1 Z"/><path d="M3 4 V2.5 Q3 1 5 1 Q7 1 7 2.5 V4" fill="none" stroke="#c4c4c4" stroke-width="1"/></svg><div class="t" style="left:490px;top:76px;color:#c4c4c4;font-size:12px;font-weight:400;line-height:16px;">Asset Store</div><svg style="position:absolute;left:1252px;top:76px;" width="4" height="12" viewBox="0 0 4 12"><g fill="#c4c4c4"><rect x="0.5" y="0.5" width="2.4" height="2.4"/><rect x="0.5" y="4.8" width="2.4" height="2.4"/><rect x="0.5" y="9.1" width="2.4" height="2.4"/></g></svg><div style="left:313px;top:92px;width:953px;height:21px;background:#3c3c3c;border-bottom:1px solid #202020"></div><div class="t" style="left:317px;top:95px;color:#c4c4c4;font-size:12px;font-weight:400;line-height:16px;">Shaded</div><svg style="position:absolute;left:419px;top:97px;" width="10" height="10" viewBox="0 0 10 10"><path d="M1 3 L9 3 L5 7.5Z" fill="#c4c4c4"/></svg><div style="left:433px;top:92px;width:1px;height:20px;background:#262626"></div><div style="left:439px;top:92px;width:1px;height:20px;background:#262626"></div><div style="left:465px;top:92px;width:1px;height:20px;background:#262626"></div><div style="left:471px;top:92px;width:1px;height:20px;background:#262626"></div><div style="left:497px;top:92px;width:1px;height:20px;background:#262626"></div><div style="left:523px;top:92px;width:1px;height:20px;background:#262626"></div><div style="left:565px;top:92px;width:1px;height:20px;background:#262626"></div><div style="left:599px;top:92px;width:1px;height:20px;background:#262626"></div><div style="left:641px;top:92px;width:1px;height:20px;background:#262626"></div><div style="left:440px;top:93px;width:25px;height:19px;background:#3f3f3f"></div><div style="left:466px;top:93px;width:5px;height:19px;background:#3a3a3a"></div><div style="left:434px;top:93px;width:5px;height:19px;background:#3a3a3a"></div><div class="t" style="left:445px;top:95px;color:#c4c4c4;font-size:11.5px;font-weight:700;line-height:16px;letter-spacing:0px">2D</div><div style="left:472px;top:93px;width:25px;height:19px;background:#525252"></div><svg style="position:absolute;left:477px;top:95px;" width="16" height="16" viewBox="0 0 16 16"><path fill="#c4c4c4" d="M8 1.3 Q12.3 1.3 12.3 5.6 Q12.3 7.8 10.2 9.6 V11 H5.8 V9.6 Q3.7 7.8 3.7 5.6 Q3.7 1.3 8 1.3Z"/><path fill="#c4c4c4" d="M6 11.8 H10 V12.6 Q10 14.2 8 14.2 Q6 14.2 6 12.6Z"/></svg><div style="left:498px;top:93px;width:25px;height:19px;background:#3c3c3c"></div><svg style="position:absolute;left:502px;top:95px;" width="16" height="16" viewBox="0 0 16 16"><path fill="#c4c4c4" d="M1.5 5.5 H4 V10.5 H1.5Z M4.8 5.3 L9 2.5 V13.5 L4.8 10.7Z"/><path d="M10.8 5.6 Q11.8 8 10.8 10.4 M12.6 4.2 Q14.3 8 12.6 11.8" fill="none" stroke="#c4c4c4" stroke-width="1.2"/></svg><div style="left:524px;top:93px;width:41px;height:19px;background:#4d4d4d"></div><svg style="position:absolute;left:527px;top:95px;" width="16" height="16" viewBox="0 0 16 16"><path fill="#c4c4c4" d="M1.5 9.5 L6.5 7 L11.5 9.5 L6.5 12Z"/><path d="M1.5 11.5 L6.5 14 L11.5 11.5" fill="none" stroke="#c4c4c4" stroke-width="1.2"/><path fill="#c4c4c4" d="M11 1 L12.1 4 L15 5 L12.1 6 L11 9 L9.9 6 L7 5 L9.9 4Z"/></svg><div style="left:548px;top:96px;width:1px;height:12px;background:#333"></div><svg style="position:absolute;left:552px;top:97px;" width="10" height="10" viewBox="0 0 10 10"><path d="M1 3 L9 3 L5 7.5Z" fill="#c4c4c4"/></svg><div style="left:566px;top:93px;width:33px;height:19px;background:#4d4d4d"></div><svg style="position:absolute;left:569px;top:95px;" width="18" height="16" viewBox="0 0 18 16"><g fill="none" stroke="#c4c4c4" stroke-width="1.2"><path d="M1.5 8.5 Q8 2.5 14.5 8.5 Q8 14.5 1.5 8.5Z"/><path d="M6 9.5 Q8 7 10.5 8.5"/><path d="M2.5 14.5 L13.5 2"/></g></svg><div class="t" style="left:588px;top:95px;color:#c4c4c4;font-size:12px;font-weight:400;line-height:16px;">0</div><div style="left:600px;top:93px;width:41px;height:19px;background:#4d4d4d"></div><svg style="position:absolute;left:603px;top:95px;" width="16" height="16" viewBox="0 0 16 16"><g stroke="#c4c4c4" stroke-width="1.1" fill="none"><path d="M3.5 1 V14 M7.5 1 V5.5 M1 3.5 H12 M1 7.5 H6 M1 11.5 H6"/></g><path d="M8 7.5 L10.5 11 L13 7.5 M10.5 11 V14.5" fill="none" stroke="#c4c4c4" stroke-width="1.5"/></svg><div style="left:624px;top:96px;width:1px;height:12px;background:#333"></div><svg style="position:absolute;left:627px;top:97px;" width="10" height="10" viewBox="0 0 10 10"><path d="M1 3 L9 3 L5 7.5Z" fill="#c4c4c4"/></svg><div style="left:921px;top:92px;width:1px;height:20px;background:#2a2a2a"></div><svg style="position:absolute;left:926px;top:95px;" width="16" height="16" viewBox="0 0 16 16"><g stroke="#c4c4c4" stroke-width="2.8" stroke-linecap="butt"><path d="M4.5 4.5 L14.5 14.5"/><path d="M13.6 2.4 L4.2 11.8"/></g><path d="M0.6 2.6 Q1 -0.2 4 0.4 L2.6 2.3 L3.9 3.6 L5.8 2.2 Q6.4 5.6 3.2 6.2Z" fill="#c4c4c4"/><path d="M1.5 14.9 L2.3 10.7 L5.3 13.7Z" fill="#c4c4c4"/><path d="M12.3 1.3 L13.8 -0.1 L16.1 2.2 L14.7 3.7Z" fill="#c4c4c4"/></svg><div style="left:947px;top:92px;width:1px;height:20px;background:#2a2a2a"></div><svg style="position:absolute;left:952px;top:96px;" width="16" height="12" viewBox="0 0 16 12"><rect x="1" y="2" width="9" height="8" fill="#c4c4c4"/><path d="M10.5 5 L14.5 2.5 V9.5 L10.5 7Z" fill="#c4c4c4"/></svg><svg style="position:absolute;left:969px;top:97px;" width="10" height="10" viewBox="0 0 10 10"><path d="M1 3 L9 3 L5 7.5Z" fill="#c4c4c4"/></svg><div style="left:982px;top:92px;width:1px;height:20px;background:#2a2a2a"></div><div style="left:983px;top:93px;width:67px;height:18px;background:#4d4d4d"></div><div class="t" style="left:986px;top:95px;color:#c4c4c4;font-size:12px;font-weight:400;line-height:16px;">Gizmos</div><div style="left:1033px;top:96px;width:1px;height:12px;background:#3a3a3a"></div><svg style="position:absolute;left:1037px;top:97px;" width="10" height="10" viewBox="0 0 10 10"><path d="M1 3 L9 3 L5 7.5Z" fill="#c4c4c4"/></svg><div style="left:1050px;top:92px;width:1px;height:20px;background:#2a2a2a"></div><div style="left:1058px;top:94px;width:205px;height:16px;background:#2a2a2a;border:1px solid #212121;border-radius:4px"></div><svg style="position:absolute;left:1062px;top:97px;" width="14" height="12" viewBox="0 0 14 12"><g fill="none" stroke="#a0a0a0" stroke-width="1.1"><circle cx="3.4" cy="4.6" r="2.3"/><path d="M5.1 6.3 L7.4 8.6"/></g><path d="M6.6 3.9 L9.6 3.9 L8.1 5.5Z" fill="#a0a0a0"/></svg><div class="t" style="left:1077px;top:94px;color:#7c7c7c;font-size:12px;font-weight:400;line-height:16px;letter-spacing:0px">All</div><div style="left:1268px;top:73px;width:650px;height:19px;background:#282828"></div><div style="left:1268px;top:73px;width:92px;height:19px;background:#3c3c3c;border-radius:3px 3px 0 0"></div><div style="left:1268px;top:73px;width:92px;height:2px;background:#3a79bb;border-radius:3px 3px 0 0"></div><svg style="position:absolute;left:1277px;top:77px;" width="12" height="12" viewBox="0 0 12 12"><circle cx="6" cy="6" r="5.5" fill="#c4c4c4"/><rect x="5.1" y="5" width="1.8" height="4.5" fill="#3c3c3c"/><rect x="5.1" y="2.5" width="1.8" height="1.6" fill="#3c3c3c"/></svg><div class="t" style="left:1292px;top:76px;color:#c4c4c4;font-size:12px;font-weight:400;line-height:16px;">Inspector</div><svg style="position:absolute;left:1884px;top:77px;" width="10" height="11" viewBox="0 0 10 11"><g fill="none" stroke="#c4c4c4" stroke-width="1.2"><path d="M2.5 5 V3 Q2.5 0.8 5 0.8 Q7.5 0.8 7.5 3"/><rect x="1.1" y="5.1" width="7.8" height="5.2"/></g></svg><svg style="position:absolute;left:1904px;top:76px;" width="4" height="12" viewBox="0 0 4 12"><g fill="#c4c4c4"><rect x="0.5" y="0.5" width="2.4" height="2.4"/><rect x="0.5" y="4.8" width="2.4" height="2.4"/><rect x="0.5" y="9.1" width="2.4" height="2.4"/></g></svg><div style="left:1268px;top:92px;width:650px;height:945px;background:#383838"></div><div style="left:1268px;top:92px;width:638px;height:59px;background:#3e3e3e"></div><svg style="position:absolute;left:1275px;top:102px;" width="22" height="24" viewBox="0 0 22 24"><g fill="none" stroke="#c8c8c8" stroke-width="1.1"><path d="M10 1 L18.5 5.5 L18.5 15.5 L10 20 L1.5 15.5 L1.5 5.5 Z M1.5 5.5 L10 10 L18.5 5.5 M10 10 V20"/></g><path d="M15.5 19.5 L21.5 19.5 L18.5 23Z" fill="#c4c4c4"/></svg><div style="left:1314px;top:103px;width:14px;height:14px;background:#2a2a2a;border:1px solid #212121;border-radius:3px"></div><svg style="position:absolute;left:1314px;top:103px;" width="14" height="14" viewBox="0 0 14 14"><path d="M3.2 7.2 L5.8 9.8 L10.8 4.2" fill="none" stroke="#e8e8e8" stroke-width="1.6"/></svg><div style="left:1334px;top:101px;width:478px;height:18px;background:#2a2a2a;border:1px solid #212121;border-top-color:#0d0d0d;border-radius:3px"></div><div style="left:1338px;top:110px;width:12px;height:1px;background:#9a9a9a"></div><div class="t" style="left:1819px;top:103px;color:#c4c4c4;font-size:12px;font-weight:400;line-height:16px;">(5)</div><div style="left:1840px;top:103px;width:14px;height:14px;background:#2a2a2a;border:1px solid #212121;border-radius:3px"></div><div class="t" style="left:1858px;top:103px;color:#c4c4c4;font-size:12px;font-weight:400;line-height:16px;">Static</div><svg style="position:absolute;left:1891px;top:107px;" width="10" height="8" viewBox="0 0 10 8"><path d="M1 1.5 L9 1.5 L5 6.5Z" fill="#c4c4c4"/></svg><div class="t" style="left:1310px;top:126px;color:#c4c4c4;font-size:12px;font-weight:400;line-height:16px;">Tag</div><div style="left:1337px;top:126px;width:261px;height:17px;background:#515151;border-bottom:1px solid #262626;border-radius:3px"></div><div class="t" style="left:1341px;top:126px;color:#d2d2d2;font-size:12px;font-weight:400;line-height:16px;">Untagged</div><svg style="position:absolute;left:1583px;top:130px;" width="10" height="8" viewBox="0 0 10 8"><path d="M1 1.5 L9 1.5 L5 6.5Z" fill="#c4c4c4"/></svg><div class="t" style="left:1613px;top:126px;color:#c4c4c4;font-size:12px;font-weight:400;line-height:16px;">Layer</div><div style="left:1650px;top:126px;width:253px;height:17px;background:#515151;border-bottom:1px solid #262626;border-radius:3px"></div><div class="t" style="left:1654px;top:126px;color:#d2d2d2;font-size:12px;font-weight:400;line-height:16px;">Default</div><svg style="position:absolute;left:1888px;top:130px;" width="10" height="8" viewBox="0 0 10 8"><path d="M1 1.5 L9 1.5 L5 6.5Z" fill="#c4c4c4"/></svg><div style="left:1268px;top:151px;width:638px;height:1px;background:#1a1a1a"></div><div style="left:1268px;top:152px;width:638px;height:21px;background:#3e3e3e;border-bottom:1px solid #2c2c2c"></div><svg style="position:absolute;left:1274px;top:159px;" width="10" height="8" viewBox="0 0 10 8"><path d="M0.5 0.5 L9.5 0.5 L5 7.5Z" fill="#7a7a7a"/></svg><svg style="position:absolute;left:1289px;top:155px;" width="14" height="14" viewBox="0 0 14 14"><g stroke-width="2.4" stroke-linecap="round"><path d="M7 2 V6.5" stroke="#9ae04a"/><path d="M6 8.5 L2.5 10.5" stroke="#5ac8f0"/><path d="M8 8.5 L11.5 10.5" stroke="#f06a3a"/></g></svg><div class="t" style="left:1328px;top:155px;color:#d4d4d4;font-size:12px;font-weight:700;line-height:16px;letter-spacing:0.25px">Transform</div><svg style="position:absolute;left:1848px;top:156px;" width="12" height="12" viewBox="0 0 12 12"><circle cx="6" cy="6" r="5.5" fill="#c4c4c4"/><text x="6" y="9.6" font-family="Liberation Sans" font-weight="700" font-size="9" fill="#3e3e3e" text-anchor="middle">?</text></svg><svg style="position:absolute;left:1868px;top:156px;" width="12" height="12" viewBox="0 0 12 12"><g stroke="#c4c4c4" stroke-width="1.3"><path d="M0.5 3.5 H11.5 M0.5 8.5 H11.5"/><path d="M7.5 0.5 V6 M4.5 6 V11.5"/></g></svg><svg style="position:absolute;left:1892px;top:156px;" width="4" height="12" viewBox="0 0 4 12"><g fill="#c4c4c4"><rect x="0.5" y="0.5" width="2.4" height="2.4"/><rect x="0.5" y="4.8" width="2.4" height="2.4"/><rect x="0.5" y="9.1" width="2.4" height="2.4"/></g></svg><div class="t" style="left:1287px;top:179px;color:#c4c4c4;font-size:12px;font-weight:400;line-height:16px;">Position</div><div class="t" style="left:1543px;top:179px;color:#c4c4c4;font-size:12px;font-weight:400;line-height:16px;">X</div><div style="left:1554px;top:177px;width:106px;height:18px;background:#2a2a2a;border:1px solid #212121;border-top-color:#0d0d0d;border-radius:3px"></div><div style="left:1557px;top:186px;width:12px;height:1px;background:#9a9a9a"></div><div class="t" style="left:1665px;top:179px;color:#c4c4c4;font-size:12px;font-weight:400;line-height:16px;">Y</div><div style="left:1676px;top:177px;width:106px;height:18px;background:#2a2a2a;border:1px solid #212121;border-top-color:#0d0d0d;border-radius:3px"></div><div class="t" style="left:1679px;top:179px;color:#c4c4c4;font-size:12px;font-weight:400;line-height:16px;">0</div><div class="t" style="left:1786px;top:179px;color:#c4c4c4;font-size:12px;font-weight:400;line-height:16px;">Z</div><div style="left:1797px;top:177px;width:106px;height:18px;background:#2a2a2a;border:1px solid #212121;border-top-color:#0d0d0d;border-radius:3px"></div><div class="t" style="left:1800px;top:179px;color:#c4c4c4;font-size:12px;font-weight:400;line-height:16px;">0.38</div><div class="t" style="left:1287px;top:199px;color:#c4c4c4;font-size:12px;font-weight:400;line-height:16px;">Rotation</div><div class="t" style="left:1543px;top:199px;color:#c4c4c4;font-size:12px;font-weight:400;line-height:16px;">X</div><div style="left:1554px;top:197px;width:106px;height:18px;background:#2a2a2a;border:1px solid #212121;border-top-color:#0d0d0d;border-radius:3px"></div><div style="left:1557px;top:206px;width:12px;height:1px;background:#9a9a9a"></div><div class="t" style="left:1665px;top:199px;color:#c4c4c4;font-size:12px;font-weight:400;line-height:16px;">Y</div><div style="left:1676px;top:197px;width:106px;height:18px;background:#2a2a2a;border:1px solid #212121;border-top-color:#0d0d0d;border-radius:3px"></div><div style="left:1679px;top:206px;width:12px;height:1px;background:#9a9a9a"></div><div class="t" style="left:1786px;top:199px;color:#c4c4c4;font-size:12px;font-weight:400;line-height:16px;">Z</div><div style="left:1797px;top:197px;width:106px;height:18px;background:#2a2a2a;border:1px solid #212121;border-top-color:#0d0d0d;border-radius:3px"></div><div style="left:1800px;top:206px;width:12px;height:1px;background:#9a9a9a"></div><div class="t" style="left:1287px;top:219px;color:#c4c4c4;font-size:12px;font-weight:400;line-height:16px;">Scale</div><div class="t" style="left:1543px;top:219px;color:#c4c4c4;font-size:12px;font-weight:400;line-height:16px;">X</div><div style="left:1554px;top:217px;width:106px;height:18px;background:#2a2a2a;border:1px solid #212121;border-top-color:#0d0d0d;border-radius:3px"></div><div style="left:1557px;top:226px;width:12px;height:1px;background:#9a9a9a"></div><div class="t" style="left:1665px;top:219px;color:#c4c4c4;font-size:12px;font-weight:400;line-height:16px;">Y</div><div style="left:1676px;top:217px;width:106px;height:18px;background:#2a2a2a;border:1px solid #212121;border-top-color:#0d0d0d;border-radius:3px"></div><div style="left:1679px;top:226px;width:12px;height:1px;background:#9a9a9a"></div><div class="t" style="left:1786px;top:219px;color:#c4c4c4;font-size:12px;font-weight:400;line-height:16px;">Z</div><div style="left:1797px;top:217px;width:106px;height:18px;background:#2a2a2a;border:1px solid #212121;border-top-color:#0d0d0d;border-radius:3px"></div><div style="left:1800px;top:226px;width:12px;height:1px;background:#9a9a9a"></div><div style="left:1268px;top:244px;width:638px;height:1px;background:#1a1a1a"></div><div style="left:1268px;top:245px;width:638px;height:21px;background:#3e3e3e;border-bottom:1px solid #2c2c2c"></div><svg style="position:absolute;left:1274px;top:252px;" width="10" height="8" viewBox="0 0 10 8"><path d="M0.5 0.5 L9.5 0.5 L5 7.5Z" fill="#7a7a7a"/></svg><svg style="position:absolute;left:1289px;top:248px;" width="14" height="14" viewBox="0 0 14 14"><path d="M7 0.5 L13.2 3.6 L13.2 10.4 L7 13.5 L0.8 10.4 L0.8 3.6Z" fill="#a8f05a"/><path d="M0.8 3.6 L7 6.8 L13.2 3.6 M7 6.8 V13.5" fill="none" stroke="#3e3e3e" stroke-width="0.9"/></svg><div style="left:1308px;top:248px;width:14px;height:14px;background:#2a2a2a;border:1px solid #1e1e1e;border-radius:3px"></div><svg style="position:absolute;left:1308px;top:248px;" width="14" height="14" viewBox="0 0 14 14"><path d="M3.2 7.2 L5.8 9.8 L10.8 4.2" fill="none" stroke="#e8e8e8" stroke-width="1.6"/></svg><div class="t" style="left:1328px;top:248px;color:#d4d4d4;font-size:12px;font-weight:700;line-height:16px;letter-spacing:0.25px">Box Collider</div><svg style="position:absolute;left:1848px;top:249px;" width="12" height="12" viewBox="0 0 12 12"><circle cx="6" cy="6" r="5.5" fill="#c4c4c4"/><text x="6" y="9.6" font-family="Liberation Sans" font-weight="700" font-size="9" fill="#3e3e3e" text-anchor="middle">?</text></svg><svg style="position:absolute;left:1868px;top:249px;" width="12" height="12" viewBox="0 0 12 12"><g stroke="#c4c4c4" stroke-width="1.3"><path d="M0.5 3.5 H11.5 M0.5 8.5 H11.5"/><path d="M7.5 0.5 V6 M4.5 6 V11.5"/></g></svg><svg style="position:absolute;left:1892px;top:249px;" width="4" height="12" viewBox="0 0 4 12"><g fill="#c4c4c4"><rect x="0.5" y="0.5" width="2.4" height="2.4"/><rect x="0.5" y="4.8" width="2.4" height="2.4"/><rect x="0.5" y="9.1" width="2.4" height="2.4"/></g></svg><div class="t" style="left:1287px;top:272px;color:#c4c4c4;font-size:12px;font-weight:400;line-height:16px;">Edit Collider</div><div style="left:1542px;top:272px;width:31px;height:21px;background:#2a2a2a;border:1px solid #1e1e1e;border-radius:3px"></div><svg style="position:absolute;left:1549px;top:275px;" width="16" height="14" viewBox="0 0 16 14"><g fill="none" stroke="#c4c4c4" stroke-width="1"><path d="M3.5 9.5 L7.5 2.5 L12.5 8.5"/><rect x="1.5" y="9.5" width="3" height="3"/><rect x="6" y="1" width="3" height="3"/><rect x="11" y="8" width="3" height="3"/></g></svg><div class="t" style="left:1287px;top:301px;color:#c4c4c4;font-size:12px;font-weight:400;line-height:16px;">Is Trigger</div><div style="left:1542px;top:301px;width:14px;height:14px;background:#2a2a2a;border:1px solid #212121;border-radius:3px"></div><div class="t" style="left:1287px;top:321px;color:#c4c4c4;font-size:12px;font-weight:400;line-height:16px;">Material</div><div style="left:1542px;top:319px;width:361px;height:18px;background:#2a2a2a;border:1px solid #212121;border-top-color:#0d0d0d;border-radius:3px"></div><div class="t" style="left:1545px;top:321px;color:#c4c4c4;font-size:12px;font-weight:400;line-height:16px;">None (Physic Material)</div><div style="left:1883px;top:320px;width:19px;height:16px;background:#2e2e2e;border-radius:0 2px 2px 0"></div><svg style="position:absolute;left:1886px;top:322px;" width="12" height="12" viewBox="0 0 12 12"><circle cx="6" cy="6" r="4.6" fill="none" stroke="#c4c4c4" stroke-width="1.1"/><circle cx="6" cy="6" r="1.8" fill="#c4c4c4"/></svg><div class="t" style="left:1287px;top:341px;color:#c4c4c4;font-size:12px;font-weight:400;line-height:16px;">Center</div><div class="t" style="left:1543px;top:341px;color:#c4c4c4;font-size:12px;font-weight:400;line-height:16px;">X</div><div style="left:1554px;top:339px;width:106px;height:18px;background:#2a2a2a;border:1px solid #212121;border-top-color:#0d0d0d;border-radius:3px"></div><div style="left:1557px;top:348px;width:12px;height:1px;background:#9a9a9a"></div><div class="t" style="left:1665px;top:341px;color:#c4c4c4;font-size:12px;font-weight:400;line-height:16px;">Y</div><div style="left:1676px;top:339px;width:106px;height:18px;background:#2a2a2a;border:1px solid #212121;border-top-color:#0d0d0d;border-radius:3px"></div><div style="left:1679px;top:348px;width:12px;height:1px;background:#9a9a9a"></div><div class="t" style="left:1786px;top:341px;color:#c4c4c4;font-size:12px;font-weight:400;line-height:16px;">Z</div><div style="left:1797px;top:339px;width:106px;height:18px;background:#2a2a2a;border:1px solid #212121;border-top-color:#0d0d0d;border-radius:3px"></div><div style="left:1800px;top:348px;width:12px;height:1px;background:#9a9a9a"></div><div class="t" style="left:1287px;top:361px;color:#c4c4c4;font-size:12px;font-weight:400;line-height:16px;">Size</div><div class="t" style="left:1543px;top:361px;color:#c4c4c4;font-size:12px;font-weight:400;line-height:16px;">X</div><div style="left:1554px;top:359px;width:106px;height:18px;background:#2a2a2a;border:1px solid #212121;border-top-color:#0d0d0d;border-radius:3px"></div><div style="left:1557px;top:368px;width:12px;height:1px;background:#9a9a9a"></div><div class="t" style="left:1665px;top:361px;color:#c4c4c4;font-size:12px;font-weight:400;line-height:16px;">Y</div><div style="left:1676px;top:359px;width:106px;height:18px;background:#2a2a2a;border:1px solid #212121;border-top-color:#0d0d0d;border-radius:3px"></div><div style="left:1679px;top:368px;width:12px;height:1px;background:#9a9a9a"></div><div class="t" style="left:1786px;top:361px;color:#c4c4c4;font-size:12px;font-weight:400;line-height:16px;">Z</div><div style="left:1797px;top:359px;width:106px;height:18px;background:#2a2a2a;border:1px solid #212121;border-top-color:#0d0d0d;border-radius:3px"></div><div style="left:1800px;top:368px;width:12px;height:1px;background:#9a9a9a"></div><div style="left:1268px;top:386px;width:638px;height:1px;background:#555555"></div><div style="left:1268px;top:387px;width:638px;height:16px;background:#3a3a3a"></div><div class="t" style="left:1269px;top:387px;color:#c4c4c4;font-size:12px;font-weight:400;line-height:16px;">Components that are only on some of the selected objects cannot be multi-edited.</div><div style="left:1268px;top:403px;width:638px;height:1px;background:#1a1a1a"></div><div style="left:1268px;top:404px;width:638px;height:21px;background:#3e3e3e;border-bottom:1px solid #2c2c2c"></div><svg style="position:absolute;left:1274px;top:411px;" width="10" height="8" viewBox="0 0 10 8"><path d="M0.5 0.5 L9.5 0.5 L5 7.5Z" fill="#7a7a7a"/></svg><svg style="position:absolute;left:1289px;top:406px;" width="14" height="16" viewBox="0 0 14 16"><path d="M1 0.5 H9.5 L13 4 V15.5 H1Z" fill="#f0f0f0"/><text x="7" y="13" font-family="Liberation Sans" font-weight="700" font-size="11" fill="#2a8a3a" text-anchor="middle">#</text></svg><div class="t" style="left:1328px;top:407px;color:#d4d4d4;font-size:12px;font-weight:700;line-height:16px;letter-spacing:0.25px">ToolTipSpawner</div><svg style="position:absolute;left:1848px;top:408px;" width="12" height="12" viewBox="0 0 12 12"><circle cx="6" cy="6" r="5.5" fill="#c4c4c4"/><text x="6" y="9.6" font-family="Liberation Sans" font-weight="700" font-size="9" fill="#3e3e3e" text-anchor="middle">?</text></svg><svg style="position:absolute;left:1868px;top:408px;" width="12" height="12" viewBox="0 0 12 12"><g stroke="#c4c4c4" stroke-width="1.3"><path d="M0.5 3.5 H11.5 M0.5 8.5 H11.5"/><path d="M7.5 0.5 V6 M4.5 6 V11.5"/></g></svg><svg style="position:absolute;left:1892px;top:408px;" width="4" height="12" viewBox="0 0 4 12"><g fill="#c4c4c4"><rect x="0.5" y="0.5" width="2.4" height="2.4"/><rect x="0.5" y="4.8" width="2.4" height="2.4"/><rect x="0.5" y="9.1" width="2.4" height="2.4"/></g></svg><div class="t" style="left:1287px;top:431px;color:#7a7a7a;font-size:12px;font-weight:400;line-height:16px;">Script</div><div style="left:1542px;top:429px;width:361px;height:18px;background:#2a2a2a;border:1px solid #212121;border-top-color:#0d0d0d;border-radius:3px"></div><svg style="position:absolute;left:1546px;top:432px;" width="12" height="14" viewBox="0 0 12 14"><path d="M1 0.5 H8 L11 3.5 V13.5 H1Z" fill="#7a7a7a"/><text x="6" y="11.5" font-family="Liberation Sans" font-weight="700" font-size="9" fill="#2a5a2a" text-anchor="middle">#</text></svg><div class="t" style="left:1558px;top:431px;color:#7a7a7a;font-size:12px;font-weight:400;line-height:16px;">ToolTipSpawner</div><div style="left:1883px;top:430px;width:19px;height:16px;background:#2e2e2e;border-radius:0 2px 2px 0"></div><svg style="position:absolute;left:1886px;top:432px;" width="12" height="12" viewBox="0 0 12 12"><circle cx="6" cy="6" r="4.6" fill="none" stroke="#777" stroke-width="1.1"/><circle cx="6" cy="6" r="1.8" fill="#777"/></svg><div class="t" style="left:1287px;top:451px;color:#c4c4c4;font-size:12px;font-weight:400;line-height:16px;">Focus Enabled</div><div style="left:1542px;top:451px;width:14px;height:14px;background:#2a2a2a;border:1px solid #212121;border-radius:3px"></div><svg style="position:absolute;left:1542px;top:451px;" width="14" height="14" viewBox="0 0 14 14"><path d="M3.2 7.2 L5.8 9.8 L10.8 4.2" fill="none" stroke="#e8e8e8" stroke-width="1.6"/></svg><div class="t" style="left:1287px;top:471px;color:#c4c4c4;font-size:12px;font-weight:400;line-height:16px;">Prefab</div><div style="left:1542px;top:469px;width:361px;height:18px;background:#2a2a2a;border:1px solid #212121;border-top-color:#0d0d0d;border-radius:3px"></div><svg style="position:absolute;left:1546px;top:472px;" width="12" height="12" viewBox="0 0 12 12"><path d="M6 0.5 L11.5 3.2 L11.5 8.8 L6 11.5 L0.5 8.8 L0.5 3.2Z" fill="#56c0ee"/><path d="M0.5 3.2 L6 6 L11.5 3.2 M6 6 V11.5" fill="none" stroke="#2a6a8a" stroke-width="0.8"/></svg><div class="t" style="left:1558px;top:471px;color:#d2d2d2;font-size:12px;font-weight:400;line-height:16px;">Simple Line ToolTip</div><div style="left:1883px;top:470px;width:19px;height:16px;background:#2e2e2e;border-radius:0 2px 2px 0"></div><svg style="position:absolute;left:1886px;top:472px;" width="12" height="12" viewBox="0 0 12 12"><circle cx="6" cy="6" r="4.6" fill="none" stroke="#c4c4c4" stroke-width="1.1"/><circle cx="6" cy="6" r="1.8" fill="#c4c4c4"/></svg><div class="t" style="left:1287px;top:500px;color:#d2d2d2;font-size:12px;font-weight:700;line-height:16px;">Input Settings</div><div class="t" style="left:1287px;top:518px;color:#c4c4c4;font-size:12px;font-weight:400;line-height:16px;">Tooltip Toggle Action</div><div style="left:1542px;top:517px;width:361px;height:18px;background:#515151;border-bottom:1px solid #262626;border-radius:3px"></div><div class="t" style="left:1546px;top:517px;color:#d2d2d2;font-size:12px;font-weight:400;line-height:16px;">None</div><svg style="position:absolute;left:1888px;top:521px;" width="10" height="8" viewBox="0 0 10 8"><path d="M1 1.5 L9 1.5 L5 6.5Z" fill="#c4c4c4"/></svg><div class="t" style="left:1287px;top:547px;color:#d2d2d2;font-size:12px;font-weight:700;line-height:16px;">Appear / Vanish Behavior Settings</div><div class="t" style="left:1287px;top:565px;color:#c4c4c4;font-size:12px;font-weight:400;line-height:16px;">Appear Type</div><div style="left:1542px;top:564px;width:361px;height:18px;background:#515151;border-bottom:1px solid #262626;border-radius:3px"></div><div class="t" style="left:1546px;top:564px;color:#d2d2d2;font-size:12px;font-weight:400;line-height:16px;">Appear On Focus Enter</div><svg style="position:absolute;left:1888px;top:568px;" width="10" height="8" viewBox="0 0 10 8"><path d="M1 1.5 L9 1.5 L5 6.5Z" fill="#c4c4c4"/></svg><div class="t" style="left:1287px;top:585px;color:#c4c4c4;font-size:12px;font-weight:400;line-height:16px;">Vanish Type</div><div style="left:1542px;top:584px;width:361px;height:18px;background:#515151;border-bottom:1px solid #262626;border-radius:3px"></div><div class="t" style="left:1546px;top:584px;color:#d2d2d2;font-size:12px;font-weight:400;line-height:16px;">Vanish On Focus Exit</div><svg style="position:absolute;left:1888px;top:588px;" width="10" height="8" viewBox="0 0 10 8"><path d="M1 1.5 L9 1.5 L5 6.5Z" fill="#c4c4c4"/></svg><div class="t" style="left:1287px;top:605px;color:#c4c4c4;font-size:12px;font-weight:400;line-height:16px;">Remain Type</div><div style="left:1542px;top:604px;width:361px;height:18px;background:#515151;border-bottom:1px solid #262626;border-radius:3px"></div><div class="t" style="left:1546px;top:604px;color:#d2d2d2;font-size:12px;font-weight:400;line-height:16px;">Timeout</div><svg style="position:absolute;left:1888px;top:608px;" width="10" height="8" viewBox="0 0 10 8"><path d="M1 1.5 L9 1.5 L5 6.5Z" fill="#c4c4c4"/></svg><div class="t" style="left:1287px;top:634px;color:#d2d2d2;font-size:12px;font-weight:700;line-height:16px;">Timing</div><div class="t" style="left:1287px;top:652px;color:#c4c4c4;font-size:12px;font-weight:400;line-height:16px;">Appear Delay</div><div style="left:1542px;top:658px;width:306px;height:2px;background:#5e5e5e;border-radius:1px"></div><div style="left:1542px;top:654px;width:10px;height:10px;background:#999;border-radius:50%"></div><div style="left:1853px;top:650px;width:49px;height:18px;background:#2a2a2a;border:1px solid #212121;border-top-color:#0d0d0d;border-radius:3px"></div><div class="t" style="left:1856px;top:652px;color:#c4c4c4;font-size:12px;font-weight:400;line-height:16px;">0</div><div class="t" style="left:1287px;top:672px;color:#c4c4c4;font-size:12px;font-weight:400;line-height:16px;">Vanish Delay</div><div style="left:1542px;top:678px;width:306px;height:2px;background:#5e5e5e;border-radius:1px"></div><div style="left:1660px;top:674px;width:10px;height:10px;background:#999;border-radius:50%"></div><div style="left:1853px;top:670px;width:49px;height:18px;background:#2a2a2a;border:1px solid #212121;border-top-color:#0d0d0d;border-radius:3px"></div><div class="t" style="left:1856px;top:672px;color:#c4c4c4;font-size:12px;font-weight:400;line-height:16px;">2</div><div class="t" style="left:1287px;top:692px;color:#c4c4c4;font-size:12px;font-weight:400;line-height:16px;">Lifetime</div><div style="left:1542px;top:698px;width:306px;height:2px;background:#5e5e5e;border-radius:1px"></div><div style="left:1557px;top:694px;width:10px;height:10px;background:#999;border-radius:50%"></div><div style="left:1853px;top:690px;width:49px;height:18px;background:#2a2a2a;border:1px solid #212121;border-top-color:#0d0d0d;border-radius:3px"></div><div class="t" style="left:1856px;top:692px;color:#c4c4c4;font-size:12px;font-weight:400;line-height:16px;">1</div><div class="t" style="left:1287px;top:721px;color:#d2d2d2;font-size:12px;font-weight:700;line-height:16px;">Orientation</div><div class="t" style="left:1287px;top:739px;color:#c4c4c4;font-size:12px;font-weight:400;line-height:16px;">Keep World Rotation</div><div style="left:1542px;top:739px;width:14px;height:14px;background:#2a2a2a;border:1px solid #212121;border-radius:3px"></div><svg style="position:absolute;left:1542px;top:739px;" width="14" height="14" viewBox="0 0 14 14"><path d="M3.2 7.2 L5.8 9.8 L10.8 4.2" fill="none" stroke="#e8e8e8" stroke-width="1.6"/></svg><div class="t" style="left:1287px;top:768px;color:#d2d2d2;font-size:12px;font-weight:700;line-height:16px;">ToolTip Override Settings</div><div class="t" style="left:1287px;top:786px;color:#c4c4c4;font-size:12px;font-weight:400;line-height:16px;">Settings Mode</div><div style="left:1542px;top:785px;width:361px;height:18px;background:#515151;border-bottom:1px solid #262626;border-radius:3px"></div><div class="t" style="left:1546px;top:785px;color:#d2d2d2;font-size:12px;font-weight:400;line-height:16px;">Override</div><svg style="position:absolute;left:1888px;top:789px;" width="10" height="8" viewBox="0 0 10 8"><path d="M1 1.5 L9 1.5 L5 6.5Z" fill="#c4c4c4"/></svg><div class="t" style="left:1287px;top:806px;color:#c4c4c4;font-size:12px;font-weight:400;line-height:16px;">Show Background</div><div style="left:1542px;top:806px;width:14px;height:14px;background:#2a2a2a;border:1px solid #212121;border-radius:3px"></div><svg style="position:absolute;left:1542px;top:806px;" width="14" height="14" viewBox="0 0 14 14"><path d="M3.2 7.2 L5.8 9.8 L10.8 4.2" fill="none" stroke="#e8e8e8" stroke-width="1.6"/></svg><div class="t" style="left:1287px;top:826px;color:#c4c4c4;font-size:12px;font-weight:400;line-height:16px;">Show Outline</div><div style="left:1542px;top:826px;width:14px;height:14px;background:#2a2a2a;border:1px solid #212121;border-radius:3px"></div><div class="t" style="left:1287px;top:846px;color:#c4c4c4;font-size:12px;font-weight:400;line-height:16px;">Show Connector</div><div style="left:1542px;top:846px;width:14px;height:14px;background:#2a2a2a;border:1px solid #212121;border-radius:3px"></div><svg style="position:absolute;left:1542px;top:846px;" width="14" height="14" viewBox="0 0 14 14"><path d="M3.2 7.2 L5.8 9.8 L10.8 4.2" fill="none" stroke="#e8e8e8" stroke-width="1.6"/></svg><div class="t" style="left:1287px;top:866px;color:#c4c4c4;font-size:12px;font-weight:400;line-height:16px;">Follow Type</div><div style="left:1542px;top:865px;width:361px;height:18px;background:#515151;border-bottom:1px solid #262626;border-radius:3px"></div><div class="t" style="left:1546px;top:865px;color:#d2d2d2;font-size:12px;font-weight:400;line-height:16px;">Anchor Only</div><svg style="position:absolute;left:1888px;top:869px;" width="10" height="8" viewBox="0 0 10 8"><path d="M1 1.5 L9 1.5 L5 6.5Z" fill="#c4c4c4"/></svg><div class="t" style="left:1287px;top:886px;color:#c4c4c4;font-size:12px;font-weight:400;line-height:16px;">Pivot Mode</div><div style="left:1542px;top:885px;width:361px;height:18px;background:#515151;border-bottom:1px solid #262626;border-radius:3px"></div><div class="t" style="left:1546px;top:885px;color:#d2d2d2;font-size:12px;font-weight:400;line-height:16px;">Manual</div><svg style="position:absolute;left:1888px;top:889px;" width="10" height="8" viewBox="0 0 10 8"><path d="M1 1.5 L9 1.5 L5 6.5Z" fill="#c4c4c4"/></svg><div class="t" style="left:1287px;top:906px;color:#c4c4c4;font-size:12px;font-weight:400;line-height:16px;">Pivot Direction</div><div style="left:1542px;top:905px;width:361px;height:18px;background:#515151;border-bottom:1px solid #262626;border-radius:3px"></div><div class="t" style="left:1546px;top:905px;color:#d2d2d2;font-size:12px;font-weight:400;line-height:16px;">North</div><svg style="position:absolute;left:1888px;top:909px;" width="10" height="8" viewBox="0 0 10 8"><path d="M1 1.5 L9 1.5 L5 6.5Z" fill="#c4c4c4"/></svg><div class="t" style="left:1287px;top:926px;color:#c4c4c4;font-size:12px;font-weight:400;line-height:16px;">Pivot Direction Orient</div><div style="left:1542px;top:925px;width:361px;height:18px;background:#515151;border-bottom:1px solid #262626;border-radius:3px"></div><div class="t" style="left:1546px;top:925px;color:#d2d2d2;font-size:12px;font-weight:400;line-height:16px;">Orient To Object</div><svg style="position:absolute;left:1888px;top:929px;" width="10" height="8" viewBox="0 0 10 8"><path d="M1 1.5 L9 1.5 L5 6.5Z" fill="#c4c4c4"/></svg><div class="t" style="left:1287px;top:946px;color:#c4c4c4;font-size:12px;font-weight:400;line-height:16px;">Manual Pivot Direction</div><div class="t" style="left:1543px;top:946px;color:#c4c4c4;font-size:12px;font-weight:400;line-height:16px;">X</div><div style="left:1554px;top:944px;width:106px;height:18px;background:#2a2a2a;border:1px solid #212121;border-top-color:#0d0d0d;border-radius:3px"></div><div class="t" style="left:1557px;top:946px;color:#c4c4c4;font-size:12px;font-weight:400;line-height:16px;">0</div><div class="t" style="left:1665px;top:946px;color:#c4c4c4;font-size:12px;font-weight:400;line-height:16px;">Y</div><div style="left:1676px;top:944px;width:106px;height:18px;background:#2a2a2a;border:1px solid #212121;border-top-color:#0d0d0d;border-radius:3px"></div><div class="t" style="left:1679px;top:946px;color:#c4c4c4;font-size:12px;font-weight:400;line-height:16px;">1</div><div class="t" style="left:1786px;top:946px;color:#c4c4c4;font-size:12px;font-weight:400;line-height:16px;">Z</div><div style="left:1797px;top:944px;width:106px;height:18px;background:#2a2a2a;border:1px solid #212121;border-top-color:#0d0d0d;border-radius:3px"></div><div class="t" style="left:1800px;top:946px;color:#c4c4c4;font-size:12px;font-weight:400;line-height:16px;">0</div><div class="t" style="left:1287px;top:966px;color:#c4c4c4;font-size:12px;font-weight:400;line-height:16px;">Manual Pivot Local Position</div><div class="t" style="left:1543px;top:966px;color:#c4c4c4;font-size:12px;font-weight:400;line-height:16px;">X</div><div style="left:1554px;top:964px;width:106px;height:18px;background:#2a2a2a;border:1px solid #212121;border-top-color:#0d0d0d;border-radius:3px"></div><div class="t" style="left:1557px;top:966px;color:#c4c4c4;font-size:12px;font-weight:400;line-height:16px;">0</div><div class="t" style="left:1665px;top:966px;color:#7aa6e8;font-size:12px;font-weight:400;line-height:16px;">Y</div><div style="left:1676px;top:964px;width:106px;height:18px;background:#2a2a2a;border:1px solid #3a79bb;border-radius:3px"></div><div class="t" style="left:1679px;top:966px;color:#c4c4c4;font-size:12px;font-weight:400;line-height:16px;">1.5</div><div class="t" style="left:1786px;top:966px;color:#c4c4c4;font-size:12px;font-weight:400;line-height:16px;">Z</div><div style="left:1797px;top:964px;width:106px;height:18px;background:#2a2a2a;border:1px solid #212121;border-top-color:#0d0d0d;border-radius:3px"></div><div class="t" style="left:1800px;top:966px;color:#c4c4c4;font-size:12px;font-weight:400;line-height:16px;">0</div><div style="left:1695px;top:966px;width:1px;height:14px;background:#e0e0e0"></div><div class="t" style="left:1287px;top:986px;color:#c4c4c4;font-size:12px;font-weight:400;line-height:16px;">Pivot Distance</div><div style="left:1542px;top:992px;width:306px;height:2px;background:#5e5e5e;border-radius:1px"></div><div style="left:1579px;top:988px;width:10px;height:10px;background:#999;border-radius:50%"></div><div style="left:1853px;top:984px;width:49px;height:18px;background:#2a2a2a;border:1px solid #212121;border-top-color:#0d0d0d;border-radius:3px"></div><div class="t" style="left:1856px;top:986px;color:#c4c4c4;font-size:12px;font-weight:400;line-height:16px;">0.25</div><div class="t" style="left:1287px;top:1006px;color:#c4c4c4;font-size:12px;font-weight:400;line-height:16px;">Tool Tip Text</div><div style="left:1542px;top:1004px;width:361px;height:18px;background:#2a2a2a;border:1px solid #212121;border-top-color:#0d0d0d;border-radius:3px"></div><div class="t" style="left:1545px;top:1006px;color:#c4c4c4;font-size:12px;font-weight:400;line-height:16px;">New Tooltip</div><div style="left:0;top:1024px;width:1906px;height:12px;overflow:hidden"><div style="left:0;top:0;width:1906px;height:30px"><div class="t" style="left:1287px;top:2px;color:#c4c4c4;font-size:12px;font-weight:400;line-height:16px;">Anchor</div><div style="left:1542px;top:0px;width:361px;height:18px;background:#2a2a2a;border:1px solid #212121;border-top-color:#0d0d0d;border-radius:3px"></div><div class="t" style="left:1545px;top:2px;color:#c4c4c4;font-size:12px;font-weight:400;line-height:16px;">None (Transform)</div><div style="left:1883px;top:1px;width:19px;height:16px;background:#2e2e2e;border-radius:0 2px 2px 0"></div><svg style="position:absolute;left:1886px;top:3px;" width="12" height="12" viewBox="0 0 12 12"><circle cx="6" cy="6" r="4.6" fill="none" stroke="#c4c4c4" stroke-width="1.1"/><circle cx="6" cy="6" r="1.8" fill="#c4c4c4"/></svg></div></div><div style="left:1906px;top:92px;width:12px;height:945px;background:#383838"></div><svg style="position:absolute;left:1908px;top:96px;" width="10" height="8" viewBox="0 0 10 8"><path d="M1 6.5 L9 6.5 L5 1.5Z" fill="#c4c4c4"/></svg><div style="left:1909px;top:109px;width:8px;height:855px;background:#5f5f5f;border-radius:4px"></div><svg style="position:absolute;left:1908px;top:1025px;" width="10" height="8" viewBox="0 0 10 8"><path d="M1 1.5 L9 1.5 L5 6.5Z" fill="#c4c4c4"/></svg><div style="left:1268px;top:1036px;width:650px;height:1px;background:#232323"></div><div style="left:1268px;top:1037px;width:635px;height:20px;background:#3e3e3e"></div><div class="t" style="left:1275px;top:1040px;color:#d4d4d4;font-size:12px;font-weight:700;line-height:16px;letter-spacing:0.25px">Intercepted Events</div><div style="left:1393px;top:1046px;width:510px;height:1px;background:#6a6a6a"></div><div style="left:1393px;top:1049px;width:510px;height:1px;background:#6a6a6a"></div><div style="left:1904px;top:1037px;width:14px;height:20px;background:#3e3e3e"></div><svg style="position:absolute;left:1910px;top:1042px;" width="4" height="12" viewBox="0 0 4 12"><g fill="#c4c4c4"><rect x="0.5" y="0.5" width="2.4" height="2.4"/><rect x="0.5" y="4.8" width="2.4" height="2.4"/><rect x="0.5" y="9.1" width="2.4" height="2.4"/></g></svg><div style="left:0px;top:667px;width:1266px;height:1px;background:#191919"></div><div style="left:0px;top:668px;width:1266px;height:20px;background:#282828"></div><div style="left:0px;top:668px;width:80px;height:20px;background:#3c3c3c;border-radius:3px 3px 0 0"></div><svg style="position:absolute;left:6px;top:673px;" width="14" height="12" viewBox="0 0 14 12"><path d="M0.5 1 H5 L6.5 2.5 H12.5 V10.5 H0.5Z" fill="#c4c4c4"/></svg><div class="t" style="left:23px;top:672px;color:#c4c4c4;font-size:12px;font-weight:400;line-height:16px;">Project</div><svg style="position:absolute;left:89px;top:672px;" width="12" height="12" viewBox="0 0 12 12"><rect x="0.5" y="0.5" width="10.5" height="11" rx="1" fill="#c4c4c4"/><path d="M2.2 3 H9.3 M2.2 5.5 H9.3 M2.2 8 H9.3" stroke="#282828" stroke-width="1.3"/></svg><div class="t" style="left:105px;top:672px;color:#c4c4c4;font-size:12px;font-weight:400;line-height:16px;">Console</div><svg style="position:absolute;left:1231px;top:672px;" width="10" height="11" viewBox="0 0 10 11"><g fill="none" stroke="#c4c4c4" stroke-width="1.2"><path d="M2.5 5 V3 Q2.5 0.8 5 0.8 Q7.5 0.8 7.5 3"/><rect x="1.1" y="5.1" width="7.8" height="5.2"/></g></svg><svg style="position:absolute;left:1251px;top:672px;" width="4" height="12" viewBox="0 0 4 12"><g fill="#c4c4c4"><rect x="0.5" y="0.5" width="2.4" height="2.4"/><rect x="0.5" y="4.8" width="2.4" height="2.4"/><rect x="0.5" y="9.1" width="2.4" height="2.4"/></g></svg><div style="left:0px;top:688px;width:1266px;height:21px;background:#3c3c3c;border-bottom:1px solid #232323"></div><svg style="position:absolute;left:7px;top:691px;" width="28" height="14" viewBox="0 0 28 14"><path d="M6 1 V13 M0.5 7 H11.5" stroke="#8e8e8e" stroke-width="1.8"/><path d="M16 5 L24 5 L20 9.5Z" fill="#8e8e8e"/></svg><div style="left:845px;top:691px;width:303px;height:16px;background:#2a2a2a;border:1px solid #212121;border-radius:4px"></div><svg style="position:absolute;left:850px;top:694px;" width="10" height="10" viewBox="0 0 10 10"><g fill="none" stroke="#c4c4c4" stroke-width="1.2"><circle cx="4" cy="4" r="2.6"/><path d="M6 6 L8.8 8.8"/></g></svg><div style="left:1149px;top:688px;width:1px;height:20px;background:#2a2a2a"></div><svg style="position:absolute;left:1153px;top:692px;" width="16" height="14" viewBox="0 0 16 14"><circle cx="5" cy="9.5" r="3.5" fill="#c4c4c4"/><rect x="1.5" y="1" width="6" height="5.5" fill="#c4c4c4"/><path d="M9 7 L12 1.5 L15 7Z" fill="#c4c4c4"/></svg><div style="left:1175px;top:688px;width:1px;height:20px;background:#2a2a2a"></div><svg style="position:absolute;left:1179px;top:692px;" width="14" height="14" viewBox="0 0 14 14"><path d="M1 7.5 L7.5 1 H12.5 V6 L6 12.5Z" fill="#c4c4c4"/><circle cx="10" cy="3.5" r="1.2" fill="#3c3c3c"/></svg><div style="left:1201px;top:688px;width:1px;height:20px;background:#2a2a2a"></div><svg style="position:absolute;left:1206px;top:692px;" width="14" height="14" viewBox="0 0 14 14"><path d="M7 0.8 L8.9 5 L13.3 5.3 L9.9 8.2 L11 12.6 L7 10.2 L3 12.6 L4.1 8.2 L0.7 5.3 L5.1 5Z" fill="#8a8a8a"/></svg><div style="left:1227px;top:688px;width:1px;height:20px;background:#2a2a2a"></div><svg style="position:absolute;left:1231px;top:692px;" width="18" height="14" viewBox="0 0 18 14"><g fill="none" stroke="#c4c4c4" stroke-width="1.2"><path d="M1.5 7 Q8 1 14.5 7 Q8 13 1.5 7Z"/><circle cx="8" cy="7" r="2.2"/><path d="M2 13 L14 1"/></g></svg><div class="t" style="left:1248px;top:691px;color:#c4c4c4;font-size:12px;font-weight:400;line-height:16px;">21</div><div style="left:0px;top:709px;width:101px;height:333px;background:#383838"></div><div style="left:0;top:709px;width:101px;height:328px;overflow:hidden"><svg style="position:absolute;left:61px;top:-1px;" width="10" height="12" viewBox="0 0 10 12"><path d="M1.5 1.5 L8.5 6 L1.5 10.5 Z" fill="#7a7a7a"/></svg><svg style="position:absolute;left:74px;top:-1px;" width="14" height="12" viewBox="0 0 14 12"><path d="M0.5 1 H5 L6.5 2.5 H12.5 V10.5 H0.5Z" fill="#c4c4c4"/></svg><div class="t" style="left:90px;top:-3px;color:#c4c4c4;font-size:12px;font-weight:400;line-height:16px;">Ut</div><svg style="position:absolute;left:60px;top:17px;" width="12" height="10" viewBox="0 0 12 10"><path d="M1.5 1.5 L10.5 1.5 L6 8.5 Z" fill="#7a7a7a"/></svg><svg style="position:absolute;left:74px;top:15px;" width="14" height="12" viewBox="0 0 14 12"><path d="M0.8 1 H5 L6.5 2.5 H11.5 V4.5 H3.5 L0.8 10.5Z" fill="none" stroke="#c4c4c4" stroke-width="1.1"/><path d="M3.5 4.8 H13.5 L11 10.8 H0.8Z" fill="none" stroke="#c4c4c4" stroke-width="1.1"/></svg><div class="t" style="left:90px;top:13px;color:#c4c4c4;font-size:12px;font-weight:400;line-height:16px;">UX</div><svg style="position:absolute;left:75px;top:31px;" width="10" height="12" viewBox="0 0 10 12"><path d="M1.5 1.5 L8.5 6 L1.5 10.5 Z" fill="#7a7a7a"/></svg><svg style="position:absolute;left:88px;top:31px;" width="14" height="12" viewBox="0 0 14 12"><path d="M0.5 1 H5 L6.5 2.5 H12.5 V10.5 H0.5Z" fill="#c4c4c4"/></svg><svg style="position:absolute;left:88px;top:47px;" width="14" height="12" viewBox="0 0 14 12"><path d="M0.5 1 H5 L6.5 2.5 H12.5 V10.5 H0.5Z" fill="#c4c4c4"/></svg><svg style="position:absolute;left:75px;top:63px;" width="10" height="12" viewBox="0 0 10 12"><path d="M1.5 1.5 L8.5 6 L1.5 10.5 Z" fill="#7a7a7a"/></svg><svg style="position:absolute;left:88px;top:63px;" width="14" height="12" viewBox="0 0 14 12"><path d="M0.5 1 H5 L6.5 2.5 H12.5 V10.5 H0.5Z" fill="#c4c4c4"/></svg><svg style="position:absolute;left:75px;top:79px;" width="10" height="12" viewBox="0 0 10 12"><path d="M1.5 1.5 L8.5 6 L1.5 10.5 Z" fill="#7a7a7a"/></svg><svg style="position:absolute;left:88px;top:79px;" width="14" height="12" viewBox="0 0 14 12"><path d="M0.5 1 H5 L6.5 2.5 H12.5 V10.5 H0.5Z" fill="#c4c4c4"/></svg><svg style="position:absolute;left:75px;top:95px;" width="10" height="12" viewBox="0 0 10 12"><path d="M1.5 1.5 L8.5 6 L1.5 10.5 Z" fill="#7a7a7a"/></svg><svg style="position:absolute;left:88px;top:95px;" width="14" height="12" viewBox="0 0 14 12"><path d="M0.5 1 H5 L6.5 2.5 H12.5 V10.5 H0.5Z" fill="#c4c4c4"/></svg><svg style="position:absolute;left:74px;top:113px;" width="12" height="10" viewBox="0 0 12 10"><path d="M1.5 1.5 L10.5 1.5 L6 8.5 Z" fill="#7a7a7a"/></svg><svg style="position:absolute;left:88px;top:111px;" width="14" height="12" viewBox="0 0 14 12"><path d="M0.8 1 H5 L6.5 2.5 H11.5 V4.5 H3.5 L0.8 10.5Z" fill="none" stroke="#c4c4c4" stroke-width="1.1"/><path d="M3.5 4.8 H13.5 L11 10.8 H0.8Z" fill="none" stroke="#c4c4c4" stroke-width="1.1"/></svg></div><div style="left:0px;top:1042px;width:101px;height:16px;background:#4a4a4a"></div><div style="left:101px;top:709px;width:14px;height:349px;background:#333333"></div><svg style="position:absolute;left:104px;top:713px;" width="10" height="8" viewBox="0 0 10 8"><path d="M1 6.5 L9 6.5 L5 1.5Z" fill="#c4c4c4"/></svg><div style="left:104px;top:859px;width:10px;height:105px;background:#5f5f5f;border-radius:5px"></div><svg style="position:absolute;left:104px;top:1045px;" width="10" height="8" viewBox="0 0 10 8"><path d="M1 1.5 L9 1.5 L5 6.5Z" fill="#c4c4c4"/></svg><div style="left:115px;top:709px;width:1px;height:349px;background:#232323"></div><div style="left:116px;top:709px;width:1150px;height:20px;background:#3e3e3e;border-bottom:1px solid #2a2a2a"></div><div class="t" style="left:120px;top:711px;color:#c4c4c4;font-size:12px;font-weight:400;line-height:16px;">Packages</div><div class="t" style="left:194px;top:711px;color:#c4c4c4;font-size:12px;font-weight:400;line-height:16px;">Mixed Reality Toolkit Foundation</div><div class="t" style="left:396px;top:711px;color:#c4c4c4;font-size:12px;font-weight:400;line-height:16px;">SDK</div><div class="t" style="left:439px;top:711px;color:#c4c4c4;font-size:12px;font-weight:400;line-height:16px;">Features</div><div class="t" style="left:506px;top:711px;color:#c4c4c4;font-size:12px;font-weight:400;line-height:16px;">UX</div><div class="t" style="left:541px;top:711px;color:#c4c4c4;font-size:12px;font-weight:400;line-height:16px;">Prefabs</div><div class="t" style="left:602px;top:711px;color:#d8d8d8;font-size:12px;font-weight:700;line-height:16px;">Tooltips</div><svg style="position:absolute;left:182px;top:714px;" width="8" height="10" viewBox="0 0 8 10"><path d="M1.5 1 L6 5 L1.5 9" fill="none" stroke="#8a8a8a" stroke-width="1.3"/></svg><svg style="position:absolute;left:384px;top:714px;" width="8" height="10" viewBox="0 0 8 10"><path d="M1.5 1 L6 5 L1.5 9" fill="none" stroke="#8a8a8a" stroke-width="1.3"/></svg><svg style="position:absolute;left:427px;top:714px;" width="8" height="10" viewBox="0 0 8 10"><path d="M1.5 1 L6 5 L1.5 9" fill="none" stroke="#8a8a8a" stroke-width="1.3"/></svg><svg style="position:absolute;left:494px;top:714px;" width="8" height="10" viewBox="0 0 8 10"><path d="M1.5 1 L6 5 L1.5 9" fill="none" stroke="#8a8a8a" stroke-width="1.3"/></svg><svg style="position:absolute;left:529px;top:714px;" width="8" height="10" viewBox="0 0 8 10"><path d="M1.5 1 L6 5 L1.5 9" fill="none" stroke="#8a8a8a" stroke-width="1.3"/></svg><svg style="position:absolute;left:590px;top:714px;" width="8" height="10" viewBox="0 0 8 10"><path d="M1.5 1 L6 5 L1.5 9" fill="none" stroke="#8a8a8a" stroke-width="1.3"/></svg><svg style="position:absolute;left:655px;top:714px;" width="8" height="10" viewBox="0 0 8 10"><path d="M1.5 1 L6 5 L1.5 9" fill="none" stroke="#8a8a8a" stroke-width="1.3"/></svg><div style="left:116px;top:729px;width:1150px;height:308px;background:#333333"></div><div style="left:133px;top:742px;width:60px;height:60px;background:#525252;box-shadow:0 1px 1px rgba(0,0,0,0.4)"></div><svg style="position:absolute;left:133px;top:742px;" width="60" height="60" viewBox="0 0 60 60"><defs><linearGradient id="pg" x1="0" y1="0" x2="1" y2="1"><stop offset="0" stop-color="#1f4a9a"/><stop offset="1" stop-color="#0c2460"/></linearGradient></defs><polygon points="12,34 42,19 42,27 12,46" fill="url(#pg)" stroke="#9aa4b4" stroke-width="0.6"/><path d="M29.5 36.5 Q35 37.5 34.2 45 L31 60" fill="none" stroke="#f4f4f4" stroke-width="1.4"/></svg><div class="t" style="left:125px;top:806px;width:76px;text-align:center;color:#c8c8c8;font-size:10.5px;line-height:14px;letter-spacing:0.1px">Bezier Too...</div><div style="left:209px;top:742px;width:60px;height:60px;background:#525252;box-shadow:0 1px 1px rgba(0,0,0,0.4)"></div><svg style="position:absolute;left:209px;top:742px;" width="60" height="60" viewBox="0 0 60 60"><polygon points="12,34 42,19 42,27 12,46" fill="url(#pg)" stroke="#9aa4b4" stroke-width="0.6"/><path d="M30 24 Q34 8 43 4 Q47 3 48 6" fill="none" stroke="#f4f4f4" stroke-width="1.4"/></svg><div class="t" style="left:201px;top:806px;width:76px;text-align:center;color:#c8c8c8;font-size:10.5px;line-height:14px;letter-spacing:0.1px">Constraine...</div><div style="left:285px;top:742px;width:60px;height:60px;background:#525252;box-shadow:0 1px 1px rgba(0,0,0,0.4)"></div><svg style="position:absolute;left:285px;top:742px;" width="60" height="60" viewBox="0 0 60 60"><polygon points="12,36 42,20 42,26 12,43" fill="url(#pg)" stroke="#9aa4b4" stroke-width="0.6"/></svg><div class="t" style="left:277px;top:806px;width:76px;text-align:center;color:#c8c8c8;font-size:10.5px;line-height:14px;letter-spacing:0.1px">LabelOnly...</div><div style="left:361px;top:742px;width:60px;height:60px;background:#525252;box-shadow:0 1px 1px rgba(0,0,0,0.4)"></div><svg style="position:absolute;left:361px;top:742px;" width="60" height="60" viewBox="0 0 60 60"><defs><linearGradient id="pg" x1="0" y1="0" x2="1" y2="1"><stop offset="0" stop-color="#1f4a9a"/><stop offset="1" stop-color="#0c2460"/></linearGradient></defs><polygon points="12,34 42,19 42,27 12,46" fill="url(#pg)" stroke="#9aa4b4" stroke-width="0.6"/><path d="M29.5 33 V60" stroke="#e8e8e8" stroke-width="1.2"/></svg><div class="t" style="left:353px;top:806px;width:76px;text-align:center;color:#c8c8c8;font-size:10.5px;line-height:14px;letter-spacing:0.1px">Simple Line...</div><div style="left:437px;top:742px;width:60px;height:60px;background:#525252;box-shadow:0 1px 1px rgba(0,0,0,0.4)"></div><div class="t" style="left:429px;top:806px;width:76px;text-align:center;color:#c8c8c8;font-size:10.5px;line-height:14px;letter-spacing:0.1px">SpeechCo...</div><div style="left:513px;top:742px;width:60px;height:60px;background:#525252;box-shadow:0 1px 1px rgba(0,0,0,0.4)"></div><svg style="position:absolute;left:513px;top:742px;" width="60" height="60" viewBox="0 0 60 60"><defs><linearGradient id="pg" x1="0" y1="0" x2="1" y2="1"><stop offset="0" stop-color="#1f4a9a"/><stop offset="1" stop-color="#0c2460"/></linearGradient></defs><polygon points="12,34 42,19 42,27 12,46" fill="url(#pg)" stroke="#9aa4b4" stroke-width="0.6"/><path d="M42 27 L45 30" stroke="#f4f4f4" stroke-width="1.2"/></svg><div class="t" style="left:505px;top:806px;width:76px;text-align:center;color:#c8c8c8;font-size:10.5px;line-height:14px;letter-spacing:0.1px">Spline Tool...</div><div style="left:116px;top:1037px;width:1150px;height:1px;background:#262626"></div><div style="left:116px;top:1038px;width:1150px;height:20px;background:#3e3e3e"></div><div style="left:1195px;top:1047px;width:55px;height:2px;background:#5e5e5e"></div><div style="left:1222px;top:1043px;width:10px;height:10px;background:#999;border-radius:50%"></div><div style="left:0px;top:1058px;width:1920px;height:22px;background:#191919"></div><svg style="position:absolute;left:3px;top:1062px;" width="14" height="13" viewBox="0 0 14 13"><path d="M7 0.8 L13.5 12.3 H0.5Z" fill="#f4bc02"/><rect x="6.2" y="4" width="1.6" height="5" fill="#191919"/><rect x="6.2" y="9.8" width="1.6" height="1.6" fill="#191919"/></svg><div class="t" style="left:20px;top:1062px;color:#f4bc02;font-size:12px;font-weight:400;line-height:16px;letter-spacing:0.25px">Please remove the CanvasRenderer component from the [TextMeshPro] GameObject as this component is no longer necessary.</div><div style="left:1815px;top:1060px;width:1px;height:17px;background:#2e2e2e"></div><div style="left:1841px;top:1060px;width:1px;height:17px;background:#2e2e2e"></div><div style="left:1867px;top:1060px;width:1px;height:17px;background:#2e2e2e"></div><div style="left:1893px;top:1060px;width:1px;height:17px;background:#2e2e2e"></div><svg style="position:absolute;left:1821px;top:1062px;" width="14" height="14" viewBox="0 0 14 14"><ellipse cx="7" cy="8" rx="4" ry="5" fill="#c4c4c4"/><path d="M3 5 L1 3 M11 5 L13 3 M3 9 L0.5 9 M11 9 L13.5 9 M3 12 L1 13.5 M11 12 L13 13.5" stroke="#c4c4c4" stroke-width="1"/><path d="M1 1 L13 13.5" stroke="#191919" stroke-width="1.6"/><path d="M1 1 L13 13.5" stroke="#c4c4c4" stroke-width="0.7"/></svg><svg style="position:absolute;left:1847px;top:1062px;" width="14" height="14" viewBox="0 0 14 14"><ellipse cx="7" cy="3" rx="5.5" ry="2.2" fill="#c4c4c4"/><path d="M1.5 5.5 Q7 9 12.5 5.5 V7.5 Q7 11 1.5 7.5Z M1.5 9.5 Q7 13 12.5 9.5 V11.5 Q7 15 1.5 11.5Z" fill="#c4c4c4"/><path d="M1 1 L13 13.5" stroke="#191919" stroke-width="1.6"/><path d="M1 1 L13 13.5" stroke="#c4c4c4" stroke-width="0.7"/></svg><svg style="position:absolute;left:1873px;top:1062px;" width="14" height="14" viewBox="0 0 14 14"><circle cx="7" cy="7" r="5.5" fill="none" stroke="#c4c4c4" stroke-width="1.1" stroke-dasharray="4 2"/><circle cx="7" cy="6.5" r="2.5" fill="#c4c4c4"/><path d="M1 1 L13 13.5" stroke="#191919" stroke-width="1.6"/><path d="M1 1 L13 13.5" stroke="#c4c4c4" stroke-width="0.7"/></svg><svg style="position:absolute;left:1898px;top:1062px;" width="15" height="15" viewBox="0 0 15 15"><circle cx="7.5" cy="7.5" r="6.5" fill="none" stroke="#c4c4c4" stroke-width="1.1"/><path d="M4.5 7.8 L6.8 10 L10.8 5.5" fill="none" stroke="#c4c4c4" stroke-width="1.4"/></svg></body></html>
